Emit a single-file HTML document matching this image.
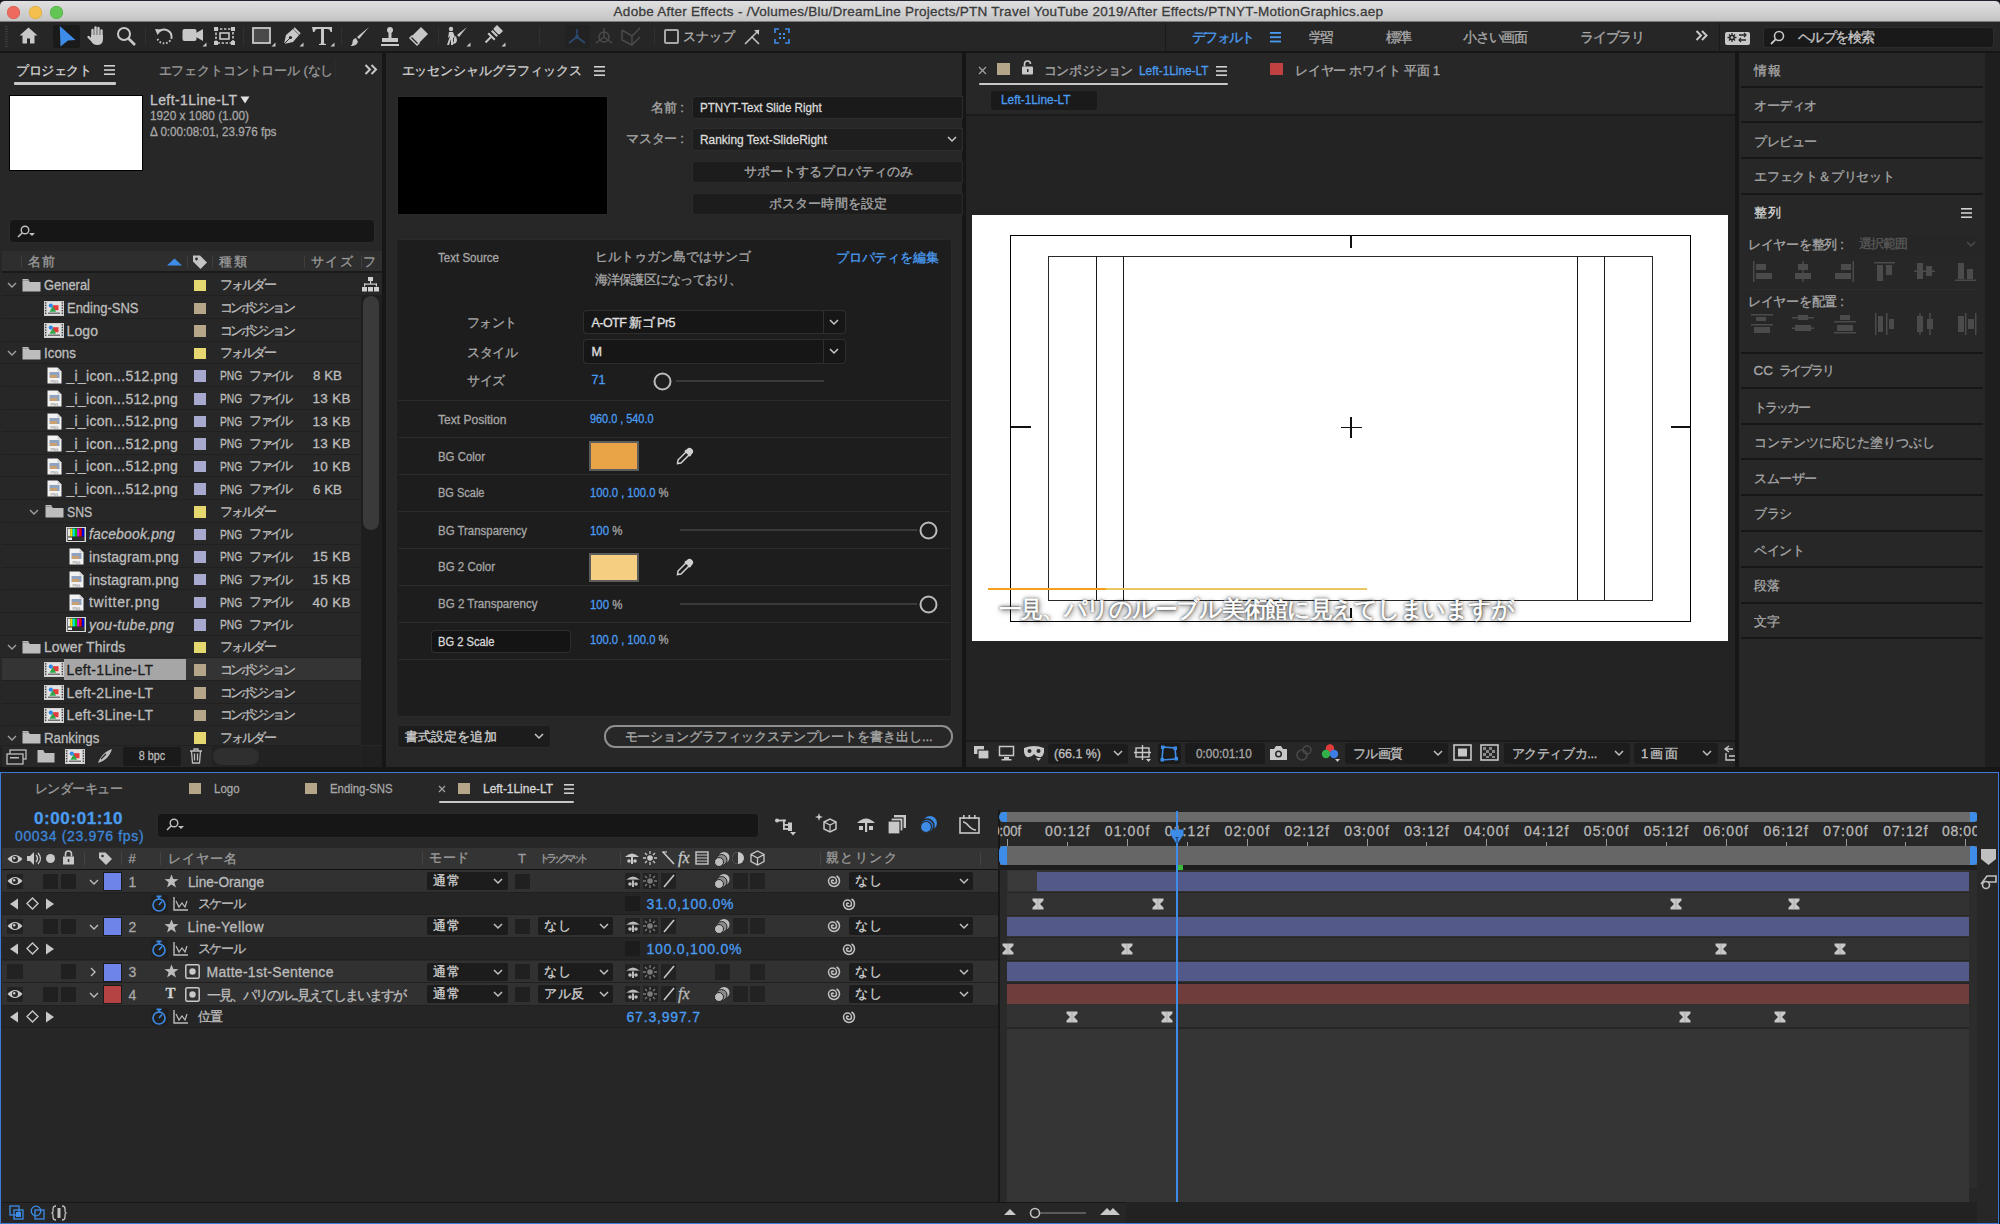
<!DOCTYPE html>
<html><head><meta charset="utf-8"><style>
html,body{margin:0;padding:0;width:2000px;height:1224px;overflow:hidden;background:#161616}
body{position:relative;font-family:"Liberation Sans",sans-serif;color:#a9a9a9}
.a{position:absolute}
.t{white-space:nowrap;-webkit-text-stroke:0.3px currentColor}
svg.a{overflow:visible}
</style></head><body>
<div class="a" style="left:0px;top:0px;width:2000px;height:22px;background:linear-gradient(#e0e0e0,#d2d2d2 50%,#c4c4c4);border-top:1.5px solid #22222e;border-bottom:1px solid #7a7a7a;box-sizing:border-box;border-radius:5px 5px 0 0"></div>
<div class="a" style="left:7.0px;top:5.5px;width:13px;height:13px;border-radius:50%;background:#ee6a5e;box-shadow:inset 0 0 0 0.5px #d0564a"></div>
<div class="a" style="left:28.5px;top:5.5px;width:13px;height:13px;border-radius:50%;background:#f5bf4f;box-shadow:inset 0 0 0 0.5px #d9a53a"></div>
<div class="a" style="left:50.0px;top:5.5px;width:13px;height:13px;border-radius:50%;background:#62c554;box-shadow:inset 0 0 0 0.5px #4aab3e"></div>
<div class="a t" style="left:398.5px;width:1200px;text-align:center;top:2.0px;font-size:13.5px;line-height:19px;color:#3a3a3a;letter-spacing:0.26px">Adobe After Effects - /Volumes/Blu/DreamLine Projects/PTN Travel YouTube 2019/After Effects/PTNYT-MotionGraphics.aep</div>
<div class="a" style="left:0px;top:22px;width:2000px;height:31px;background:#262626;border-bottom:2px solid #161616;box-sizing:border-box"></div>
<div class="a" style="left:0px;top:53px;width:382px;height:714px;background:#272727"></div>
<div class="a t" style="left:16px;top:61.5px;font-size:13px;line-height:18px;color:#d4d4d4;letter-spacing:-0.40px;width:86.0px;clip-path:inset(-12px 0 -12px -12px)">プロジェクト</div>
<svg class="a" style="left:104px;top:65px;" width="12" height="11" viewBox="0 0 12 11"><g fill="#d0d0d0"><rect x="0" y="0" width="11" height="1.6"/><rect x="0" y="4.2" width="11" height="1.6"/><rect x="0" y="8.4" width="11" height="1.6"/></g></svg>
<div class="a" style="left:14px;top:82px;width:102px;height:2.5px;background:#c8c8c8;border-radius:1px"></div>
<div class="a t" style="left:158.5px;top:61.5px;font-size:13px;line-height:18px;color:#9a9a9a;letter-spacing:-0.14px;width:185.0px;clip-path:inset(-12px 0 -12px -12px)">エフェクトコントロール (なし</div>
<div class="a" style="left:335px;top:60px;width:1px;height:22px;background:#2c2c2c"></div>
<svg class="a" style="left:364px;top:64px;" width="14" height="11" viewBox="0 0 14 11"><path d="M1.5 1 L6 5.5 L1.5 10 M7.5 1 L12 5.5 L7.5 10" stroke="#c8c8c8" stroke-width="2" fill="none"/></svg>
<div class="a" style="left:9px;top:95px;width:134px;height:76px;background:#ffffff;border:1px solid #000;box-sizing:border-box"></div>
<div class="a t" style="left:150px;top:90.0px;font-size:14px;line-height:20px;color:#c4c4c4;letter-spacing:0.40px;width:97.0px;clip-path:inset(-12px 0 -12px -12px)">Left-1Line-LT</div>
<svg class="a" style="left:240px;top:96px;" width="10" height="8" viewBox="0 0 10 8"><path d="M0.5 0.5 h9 L5 7.5z" fill="#e0e0e0"/></svg>
<div class="a t" style="left:150px;top:107.0px;font-size:13px;line-height:18px;color:#a8a8a8;transform:scaleX(0.907);transform-origin:left center">1920 x 1080 (1.00)</div>
<div class="a t" style="left:150px;top:122.5px;font-size:13px;line-height:18px;color:#a8a8a8;transform:scaleX(0.897);transform-origin:left center">&#916; 0:00:08:01, 23.976 fps</div>
<div class="a" style="left:9.5px;top:220px;width:364px;height:22px;background:#161616;border-radius:4px;box-shadow:0 0 0 1px #2a2a2a"></div>
<svg class="a" style="left:17px;top:225px;" width="20" height="13" viewBox="0 0 20 13"><circle cx="8" cy="5" r="3.8" stroke="#c0c0c0" stroke-width="1.4" fill="none"/><path d="M5.3 7.8 L1 12" stroke="#c0c0c0" stroke-width="1.6"/><path d="M12 8 h6 l-3 3z" fill="#c0c0c0"/></svg>
<div class="a" style="left:2px;top:251px;width:380px;height:22px;background:#2e2e2e;border-bottom:2px solid #1a1a1a;box-sizing:border-box"></div>
<div class="a" style="left:20.5px;top:256px;width:1px;height:12px;background:#3e3e3e"></div>
<div class="a" style="left:187px;top:256px;width:1px;height:12px;background:#3e3e3e"></div>
<div class="a" style="left:212px;top:256px;width:1px;height:12px;background:#3e3e3e"></div>
<div class="a" style="left:304px;top:256px;width:1px;height:12px;background:#3e3e3e"></div>
<div class="a" style="left:361px;top:256px;width:1px;height:12px;background:#3e3e3e"></div>
<div class="a t" style="left:27.5px;top:253.0px;font-size:13px;line-height:18px;color:#9c9c9c;letter-spacing:1.50px;width:37.5px;clip-path:inset(-12px 0 -12px -12px)">名前</div>
<svg class="a" style="left:167px;top:258px;" width="15" height="8" viewBox="0 0 15 8"><path d="M0 7.5 L7.5 0.5 L15 7.5z" fill="#3d8de8"/></svg>
<svg class="a" style="left:192px;top:254px;" width="16" height="16" viewBox="0 0 16 16"><path d="M1 1.5 h7 l7 7 -6.5 6.5 -7.5-7.5z" fill="#c4c4c4"/><circle cx="4.5" cy="5" r="1.4" fill="#2e2e2e"/></svg>
<div class="a t" style="left:218.5px;top:253.0px;font-size:13px;line-height:18px;color:#9c9c9c;letter-spacing:2.60px;width:38.6px;clip-path:inset(-12px 0 -12px -12px)">種類</div>
<div class="a t" style="left:310.5px;top:253.0px;font-size:13px;line-height:18px;color:#9c9c9c;letter-spacing:1.50px;width:52.0px;clip-path:inset(-12px 0 -12px -12px)">サイズ</div>
<div class="a t" style="left:363px;top:253.0px;font-size:13px;line-height:18px;color:#9c9c9c">フ</div>
<div class="a" style="left:2px;top:273.8px;width:359px;height:22.62px;background:#272727;border-bottom:1px solid #202020;box-sizing:border-box"></div>
<svg class="a" style="left:6.5px;top:282.41px;" width="10" height="6" viewBox="0 0 10 6"><path d="M1 1 L5 5 L9 1" stroke="#a0a0a0" stroke-width="1.4" fill="none"/></svg>
<svg class="a" style="left:21.5px;top:277.91px;" width="19" height="14" viewBox="0 0 19 14"><path d="M0.5 2.5 h6 l1.5 1.5 h10.5 v9.5 h-18z" fill="#bdbdbd"/><path d="M0.5 1 h5.5 l1.5 1.5 h-7z" fill="#bdbdbd"/></svg>
<div class="a t" style="left:44px;top:275.4px;font-size:14px;line-height:20px;color:#bdbdbd;;transform:scaleX(0.923);transform-origin:left center">General</div>
<div class="a" style="left:193.5px;top:279.91px;width:12px;height:11.5px;background:#e6d870"></div>
<div class="a t" style="left:219.5px;top:276.4px;font-size:13px;line-height:18px;color:#bdbdbd;letter-spacing:-1.80px;width:67.8px;clip-path:inset(-12px 0 -12px -12px)">フォルダー</div>
<div class="a" style="left:2px;top:296.42px;width:359px;height:22.62px;background:#272727;border-bottom:1px solid #202020;box-sizing:border-box"></div>
<svg class="a" style="left:44px;top:300.53000000000003px;" width="20" height="15" viewBox="0 0 20 15"><rect x="0" y="0" width="20" height="15" fill="#cfcfcf"/><g fill="#3a3a3a"><rect x="1" y="1.2" width="1.3" height="1.3"/><rect x="17.7" y="1.2" width="1.3" height="1.3"/><rect x="1" y="3.8" width="1.3" height="1.3"/><rect x="17.7" y="3.8" width="1.3" height="1.3"/><rect x="1" y="6.4" width="1.3" height="1.3"/><rect x="17.7" y="6.4" width="1.3" height="1.3"/><rect x="1" y="9.0" width="1.3" height="1.3"/><rect x="17.7" y="9.0" width="1.3" height="1.3"/><rect x="1" y="11.6" width="1.3" height="1.3"/><rect x="17.7" y="11.6" width="1.3" height="1.3"/></g><rect x="3.2" y="1" width="13.6" height="13" fill="#e2e2e2"/><rect x="4" y="11.6" width="12" height="1.2" fill="#555"/><rect x="9" y="4.2" width="5.5" height="5" fill="#e53b3b"/><path d="M5.5 10.8 l3.3-5.8 3.3 5.8z" fill="#2fa84a"/><circle cx="6.8" cy="4.6" r="2.1" fill="#2f86e6"/></svg>
<div class="a t" style="left:66.5px;top:298.0px;font-size:14px;line-height:20px;color:#bdbdbd;;transform:scaleX(0.927);transform-origin:left center">Ending-SNS</div>
<div class="a" style="left:193.5px;top:302.53000000000003px;width:12px;height:11.5px;background:#b5a589"></div>
<div class="a t" style="left:219.5px;top:299.0px;font-size:13px;line-height:18px;color:#bdbdbd;letter-spacing:-2.50px;width:86.0px;clip-path:inset(-12px 0 -12px -12px)">コンポジション</div>
<div class="a" style="left:2px;top:319.04px;width:359px;height:22.62px;background:#272727;border-bottom:1px solid #202020;box-sizing:border-box"></div>
<svg class="a" style="left:44px;top:323.15000000000003px;" width="20" height="15" viewBox="0 0 20 15"><rect x="0" y="0" width="20" height="15" fill="#cfcfcf"/><g fill="#3a3a3a"><rect x="1" y="1.2" width="1.3" height="1.3"/><rect x="17.7" y="1.2" width="1.3" height="1.3"/><rect x="1" y="3.8" width="1.3" height="1.3"/><rect x="17.7" y="3.8" width="1.3" height="1.3"/><rect x="1" y="6.4" width="1.3" height="1.3"/><rect x="17.7" y="6.4" width="1.3" height="1.3"/><rect x="1" y="9.0" width="1.3" height="1.3"/><rect x="17.7" y="9.0" width="1.3" height="1.3"/><rect x="1" y="11.6" width="1.3" height="1.3"/><rect x="17.7" y="11.6" width="1.3" height="1.3"/></g><rect x="3.2" y="1" width="13.6" height="13" fill="#e2e2e2"/><rect x="4" y="11.6" width="12" height="1.2" fill="#555"/><rect x="9" y="4.2" width="5.5" height="5" fill="#e53b3b"/><path d="M5.5 10.8 l3.3-5.8 3.3 5.8z" fill="#2fa84a"/><circle cx="6.8" cy="4.6" r="2.1" fill="#2f86e6"/></svg>
<div class="a t" style="left:66.5px;top:320.7px;font-size:14px;line-height:20px;color:#bdbdbd;;letter-spacing:0.15px;width:41.6px;clip-path:inset(-12px 0 -12px -12px)">Logo</div>
<div class="a" style="left:193.5px;top:325.15000000000003px;width:12px;height:11.5px;background:#b5a589"></div>
<div class="a t" style="left:219.5px;top:321.7px;font-size:13px;line-height:18px;color:#bdbdbd;letter-spacing:-2.50px;width:86.0px;clip-path:inset(-12px 0 -12px -12px)">コンポジション</div>
<div class="a" style="left:2px;top:341.66px;width:359px;height:22.62px;background:#272727;border-bottom:1px solid #202020;box-sizing:border-box"></div>
<svg class="a" style="left:6.5px;top:350.27000000000004px;" width="10" height="6" viewBox="0 0 10 6"><path d="M1 1 L5 5 L9 1" stroke="#a0a0a0" stroke-width="1.4" fill="none"/></svg>
<svg class="a" style="left:21.5px;top:345.77000000000004px;" width="19" height="14" viewBox="0 0 19 14"><path d="M0.5 2.5 h6 l1.5 1.5 h10.5 v9.5 h-18z" fill="#bdbdbd"/><path d="M0.5 1 h5.5 l1.5 1.5 h-7z" fill="#bdbdbd"/></svg>
<div class="a t" style="left:44px;top:343.3px;font-size:14px;line-height:20px;color:#bdbdbd;;transform:scaleX(0.956);transform-origin:left center">Icons</div>
<div class="a" style="left:193.5px;top:347.77000000000004px;width:12px;height:11.5px;background:#e6d870"></div>
<div class="a t" style="left:219.5px;top:344.3px;font-size:13px;line-height:18px;color:#bdbdbd;letter-spacing:-1.80px;width:67.8px;clip-path:inset(-12px 0 -12px -12px)">フォルダー</div>
<div class="a" style="left:2px;top:364.28000000000003px;width:359px;height:22.62px;background:#272727;border-bottom:1px solid #202020;box-sizing:border-box"></div>
<svg class="a" style="left:46.5px;top:367.39000000000004px;" width="15" height="17" viewBox="0 0 15 17"><path d="M0.5 0.5 h10 l4 4 v12 h-14z" fill="#f2f2f2"/><path d="M10.5 0.5 v4 h4" fill="#cfcfcf"/><rect x="2.5" y="5" width="10" height="6" fill="#8fa3c0"/><rect x="3" y="8" width="7" height="3" fill="#c9a070"/><text x="7.5" y="15.5" font-size="3.6" text-anchor="middle" fill="#777" font-family="Liberation Sans">PNG</text></svg>
<div class="a t" style="left:66.5px;top:365.9px;font-size:14px;line-height:20px;color:#bdbdbd;;letter-spacing:0.29px;width:121.3px;clip-path:inset(-12px 0 -12px -12px)">_i_icon...512.png</div>
<div class="a" style="left:193.5px;top:370.39000000000004px;width:12px;height:11.5px;background:#a8a9cf"></div>
<div class="a t" style="left:219.5px;top:366.4px;font-size:13.5px;line-height:19px;color:#bdbdbd;transform:scaleX(0.762);transform-origin:left center">PNG</div>
<div class="a t" style="left:249.4px;top:366.9px;font-size:13px;line-height:18px;color:#bdbdbd;letter-spacing:-2.83px;width:53.5px;clip-path:inset(-12px 0 -12px -12px)">ファイル</div>
<div class="a t" style="left:312.5px;top:366.4px;font-size:13.5px;line-height:19px;color:#bdbdbd;transform:scaleX(0.990);transform-origin:left center">8 KB</div>
<div class="a" style="left:2px;top:386.90000000000003px;width:359px;height:22.62px;background:#272727;border-bottom:1px solid #202020;box-sizing:border-box"></div>
<svg class="a" style="left:46.5px;top:390.01000000000005px;" width="15" height="17" viewBox="0 0 15 17"><path d="M0.5 0.5 h10 l4 4 v12 h-14z" fill="#f2f2f2"/><path d="M10.5 0.5 v4 h4" fill="#cfcfcf"/><rect x="2.5" y="5" width="10" height="6" fill="#8fa3c0"/><rect x="3" y="8" width="7" height="3" fill="#c9a070"/><text x="7.5" y="15.5" font-size="3.6" text-anchor="middle" fill="#777" font-family="Liberation Sans">PNG</text></svg>
<div class="a t" style="left:66.5px;top:388.5px;font-size:14px;line-height:20px;color:#bdbdbd;;letter-spacing:0.29px;width:121.3px;clip-path:inset(-12px 0 -12px -12px)">_i_icon...512.png</div>
<div class="a" style="left:193.5px;top:393.01000000000005px;width:12px;height:11.5px;background:#a8a9cf"></div>
<div class="a t" style="left:219.5px;top:389.0px;font-size:13.5px;line-height:19px;color:#bdbdbd;transform:scaleX(0.762);transform-origin:left center">PNG</div>
<div class="a t" style="left:249.4px;top:389.5px;font-size:13px;line-height:18px;color:#bdbdbd;letter-spacing:-2.83px;width:53.5px;clip-path:inset(-12px 0 -12px -12px)">ファイル</div>
<div class="a t" style="left:312.5px;top:389.0px;font-size:13.5px;line-height:19px;color:#bdbdbd;letter-spacing:0.30px;width:48.0px;clip-path:inset(-12px 0 -12px -12px)">13 KB</div>
<div class="a" style="left:2px;top:409.52px;width:359px;height:22.62px;background:#272727;border-bottom:1px solid #202020;box-sizing:border-box"></div>
<svg class="a" style="left:46.5px;top:412.63px;" width="15" height="17" viewBox="0 0 15 17"><path d="M0.5 0.5 h10 l4 4 v12 h-14z" fill="#f2f2f2"/><path d="M10.5 0.5 v4 h4" fill="#cfcfcf"/><rect x="2.5" y="5" width="10" height="6" fill="#8fa3c0"/><rect x="3" y="8" width="7" height="3" fill="#c9a070"/><text x="7.5" y="15.5" font-size="3.6" text-anchor="middle" fill="#777" font-family="Liberation Sans">PNG</text></svg>
<div class="a t" style="left:66.5px;top:411.1px;font-size:14px;line-height:20px;color:#bdbdbd;;letter-spacing:0.29px;width:121.3px;clip-path:inset(-12px 0 -12px -12px)">_i_icon...512.png</div>
<div class="a" style="left:193.5px;top:415.63px;width:12px;height:11.5px;background:#a8a9cf"></div>
<div class="a t" style="left:219.5px;top:411.6px;font-size:13.5px;line-height:19px;color:#bdbdbd;transform:scaleX(0.762);transform-origin:left center">PNG</div>
<div class="a t" style="left:249.4px;top:412.1px;font-size:13px;line-height:18px;color:#bdbdbd;letter-spacing:-2.83px;width:53.5px;clip-path:inset(-12px 0 -12px -12px)">ファイル</div>
<div class="a t" style="left:312.5px;top:411.6px;font-size:13.5px;line-height:19px;color:#bdbdbd;letter-spacing:0.30px;width:48.0px;clip-path:inset(-12px 0 -12px -12px)">13 KB</div>
<div class="a" style="left:2px;top:432.14px;width:359px;height:22.62px;background:#272727;border-bottom:1px solid #202020;box-sizing:border-box"></div>
<svg class="a" style="left:46.5px;top:435.25px;" width="15" height="17" viewBox="0 0 15 17"><path d="M0.5 0.5 h10 l4 4 v12 h-14z" fill="#f2f2f2"/><path d="M10.5 0.5 v4 h4" fill="#cfcfcf"/><rect x="2.5" y="5" width="10" height="6" fill="#8fa3c0"/><rect x="3" y="8" width="7" height="3" fill="#c9a070"/><text x="7.5" y="15.5" font-size="3.6" text-anchor="middle" fill="#777" font-family="Liberation Sans">PNG</text></svg>
<div class="a t" style="left:66.5px;top:433.8px;font-size:14px;line-height:20px;color:#bdbdbd;;letter-spacing:0.29px;width:121.3px;clip-path:inset(-12px 0 -12px -12px)">_i_icon...512.png</div>
<div class="a" style="left:193.5px;top:438.25px;width:12px;height:11.5px;background:#a8a9cf"></div>
<div class="a t" style="left:219.5px;top:434.2px;font-size:13.5px;line-height:19px;color:#bdbdbd;transform:scaleX(0.762);transform-origin:left center">PNG</div>
<div class="a t" style="left:249.4px;top:434.8px;font-size:13px;line-height:18px;color:#bdbdbd;letter-spacing:-2.83px;width:53.5px;clip-path:inset(-12px 0 -12px -12px)">ファイル</div>
<div class="a t" style="left:312.5px;top:434.2px;font-size:13.5px;line-height:19px;color:#bdbdbd;letter-spacing:0.30px;width:48.0px;clip-path:inset(-12px 0 -12px -12px)">13 KB</div>
<div class="a" style="left:2px;top:454.76px;width:359px;height:22.62px;background:#272727;border-bottom:1px solid #202020;box-sizing:border-box"></div>
<svg class="a" style="left:46.5px;top:457.87px;" width="15" height="17" viewBox="0 0 15 17"><path d="M0.5 0.5 h10 l4 4 v12 h-14z" fill="#f2f2f2"/><path d="M10.5 0.5 v4 h4" fill="#cfcfcf"/><rect x="2.5" y="5" width="10" height="6" fill="#8fa3c0"/><rect x="3" y="8" width="7" height="3" fill="#c9a070"/><text x="7.5" y="15.5" font-size="3.6" text-anchor="middle" fill="#777" font-family="Liberation Sans">PNG</text></svg>
<div class="a t" style="left:66.5px;top:456.4px;font-size:14px;line-height:20px;color:#bdbdbd;;letter-spacing:0.29px;width:121.3px;clip-path:inset(-12px 0 -12px -12px)">_i_icon...512.png</div>
<div class="a" style="left:193.5px;top:460.87px;width:12px;height:11.5px;background:#a8a9cf"></div>
<div class="a t" style="left:219.5px;top:456.9px;font-size:13.5px;line-height:19px;color:#bdbdbd;transform:scaleX(0.762);transform-origin:left center">PNG</div>
<div class="a t" style="left:249.4px;top:457.4px;font-size:13px;line-height:18px;color:#bdbdbd;letter-spacing:-2.83px;width:53.5px;clip-path:inset(-12px 0 -12px -12px)">ファイル</div>
<div class="a t" style="left:312.5px;top:456.9px;font-size:13.5px;line-height:19px;color:#bdbdbd;letter-spacing:0.30px;width:48.0px;clip-path:inset(-12px 0 -12px -12px)">10 KB</div>
<div class="a" style="left:2px;top:477.38px;width:359px;height:22.62px;background:#272727;border-bottom:1px solid #202020;box-sizing:border-box"></div>
<svg class="a" style="left:46.5px;top:480.49px;" width="15" height="17" viewBox="0 0 15 17"><path d="M0.5 0.5 h10 l4 4 v12 h-14z" fill="#f2f2f2"/><path d="M10.5 0.5 v4 h4" fill="#cfcfcf"/><rect x="2.5" y="5" width="10" height="6" fill="#8fa3c0"/><rect x="3" y="8" width="7" height="3" fill="#c9a070"/><text x="7.5" y="15.5" font-size="3.6" text-anchor="middle" fill="#777" font-family="Liberation Sans">PNG</text></svg>
<div class="a t" style="left:66.5px;top:479.0px;font-size:14px;line-height:20px;color:#bdbdbd;;letter-spacing:0.29px;width:121.3px;clip-path:inset(-12px 0 -12px -12px)">_i_icon...512.png</div>
<div class="a" style="left:193.5px;top:483.49px;width:12px;height:11.5px;background:#a8a9cf"></div>
<div class="a t" style="left:219.5px;top:479.5px;font-size:13.5px;line-height:19px;color:#bdbdbd;transform:scaleX(0.762);transform-origin:left center">PNG</div>
<div class="a t" style="left:249.4px;top:480.0px;font-size:13px;line-height:18px;color:#bdbdbd;letter-spacing:-2.83px;width:53.5px;clip-path:inset(-12px 0 -12px -12px)">ファイル</div>
<div class="a t" style="left:312.5px;top:479.5px;font-size:13.5px;line-height:19px;color:#bdbdbd;transform:scaleX(0.990);transform-origin:left center">6 KB</div>
<div class="a" style="left:2px;top:500.0px;width:359px;height:22.62px;background:#272727;border-bottom:1px solid #202020;box-sizing:border-box"></div>
<svg class="a" style="left:29px;top:508.61px;" width="10" height="6" viewBox="0 0 10 6"><path d="M1 1 L5 5 L9 1" stroke="#a0a0a0" stroke-width="1.4" fill="none"/></svg>
<svg class="a" style="left:44.5px;top:504.11px;" width="19" height="14" viewBox="0 0 19 14"><path d="M0.5 2.5 h6 l1.5 1.5 h10.5 v9.5 h-18z" fill="#bdbdbd"/><path d="M0.5 1 h5.5 l1.5 1.5 h-7z" fill="#bdbdbd"/></svg>
<div class="a t" style="left:66.5px;top:501.6px;font-size:14px;line-height:20px;color:#bdbdbd;;transform:scaleX(0.875);transform-origin:left center">SNS</div>
<div class="a" style="left:193.5px;top:506.11px;width:12px;height:11.5px;background:#e6d870"></div>
<div class="a t" style="left:219.5px;top:502.6px;font-size:13px;line-height:18px;color:#bdbdbd;letter-spacing:-1.80px;width:67.8px;clip-path:inset(-12px 0 -12px -12px)">フォルダー</div>
<div class="a" style="left:2px;top:522.62px;width:359px;height:22.62px;background:#272727;border-bottom:1px solid #202020;box-sizing:border-box"></div>
<svg class="a" style="left:66px;top:526.7299999999999px;" width="20" height="15" viewBox="0 0 20 15"><rect x="0" y="0" width="20" height="15" fill="#d8d8d8"/><rect x="1.5" y="1" width="17" height="13" fill="#202020"/><rect x="2.0" y="1.5" width="2.3" height="8" fill="#e8e8e8"/><rect x="4.3" y="1.5" width="2.3" height="8" fill="#e8e800"/><rect x="6.6" y="1.5" width="2.3" height="8" fill="#00e8e8"/><rect x="8.9" y="1.5" width="2.3" height="8" fill="#00c000"/><rect x="11.2" y="1.5" width="2.3" height="8" fill="#e800e8"/><rect x="13.5" y="1.5" width="2.3" height="8" fill="#e80000"/><rect x="15.8" y="1.5" width="2.3" height="8" fill="#0000e8"/><rect x="2" y="10" width="16" height="3.5" fill="#303030"/><rect x="2" y="10.5" width="4" height="2.5" fill="#e8e8e8"/></svg>
<div class="a t" style="left:89px;top:524.2px;font-size:14px;line-height:20px;color:#bdbdbd;font-style:italic;letter-spacing:0.16px;width:95.8px;clip-path:inset(-12px 0 -12px -12px)">facebook.png</div>
<div class="a" style="left:193.5px;top:528.7299999999999px;width:12px;height:11.5px;background:#a8a9cf"></div>
<div class="a t" style="left:219.5px;top:524.7px;font-size:13.5px;line-height:19px;color:#bdbdbd;transform:scaleX(0.762);transform-origin:left center">PNG</div>
<div class="a t" style="left:249.4px;top:525.2px;font-size:13px;line-height:18px;color:#bdbdbd;letter-spacing:-2.83px;width:53.5px;clip-path:inset(-12px 0 -12px -12px)">ファイル</div>
<div class="a" style="left:2px;top:545.24px;width:359px;height:22.62px;background:#272727;border-bottom:1px solid #202020;box-sizing:border-box"></div>
<svg class="a" style="left:68.5px;top:548.3499999999999px;" width="15" height="17" viewBox="0 0 15 17"><path d="M0.5 0.5 h10 l4 4 v12 h-14z" fill="#f2f2f2"/><path d="M10.5 0.5 v4 h4" fill="#cfcfcf"/><rect x="2.5" y="5" width="10" height="6" fill="#8fa3c0"/><rect x="3" y="8" width="7" height="3" fill="#c9a070"/><text x="7.5" y="15.5" font-size="3.6" text-anchor="middle" fill="#777" font-family="Liberation Sans">PNG</text></svg>
<div class="a t" style="left:89px;top:546.8px;font-size:14px;line-height:20px;color:#bdbdbd;;letter-spacing:0.09px;width:99.8px;clip-path:inset(-12px 0 -12px -12px)">instagram.png</div>
<div class="a" style="left:193.5px;top:551.3499999999999px;width:12px;height:11.5px;background:#a8a9cf"></div>
<div class="a t" style="left:219.5px;top:547.3px;font-size:13.5px;line-height:19px;color:#bdbdbd;transform:scaleX(0.762);transform-origin:left center">PNG</div>
<div class="a t" style="left:249.4px;top:547.8px;font-size:13px;line-height:18px;color:#bdbdbd;letter-spacing:-2.83px;width:53.5px;clip-path:inset(-12px 0 -12px -12px)">ファイル</div>
<div class="a t" style="left:312.5px;top:547.3px;font-size:13.5px;line-height:19px;color:#bdbdbd;letter-spacing:0.30px;width:48.0px;clip-path:inset(-12px 0 -12px -12px)">15 KB</div>
<div class="a" style="left:2px;top:567.86px;width:359px;height:22.62px;background:#272727;border-bottom:1px solid #202020;box-sizing:border-box"></div>
<svg class="a" style="left:68.5px;top:570.9699999999999px;" width="15" height="17" viewBox="0 0 15 17"><path d="M0.5 0.5 h10 l4 4 v12 h-14z" fill="#f2f2f2"/><path d="M10.5 0.5 v4 h4" fill="#cfcfcf"/><rect x="2.5" y="5" width="10" height="6" fill="#8fa3c0"/><rect x="3" y="8" width="7" height="3" fill="#c9a070"/><text x="7.5" y="15.5" font-size="3.6" text-anchor="middle" fill="#777" font-family="Liberation Sans">PNG</text></svg>
<div class="a t" style="left:89px;top:569.5px;font-size:14px;line-height:20px;color:#bdbdbd;;letter-spacing:0.09px;width:99.8px;clip-path:inset(-12px 0 -12px -12px)">instagram.png</div>
<div class="a" style="left:193.5px;top:573.9699999999999px;width:12px;height:11.5px;background:#a8a9cf"></div>
<div class="a t" style="left:219.5px;top:570.0px;font-size:13.5px;line-height:19px;color:#bdbdbd;transform:scaleX(0.762);transform-origin:left center">PNG</div>
<div class="a t" style="left:249.4px;top:570.5px;font-size:13px;line-height:18px;color:#bdbdbd;letter-spacing:-2.83px;width:53.5px;clip-path:inset(-12px 0 -12px -12px)">ファイル</div>
<div class="a t" style="left:312.5px;top:570.0px;font-size:13.5px;line-height:19px;color:#bdbdbd;letter-spacing:0.30px;width:48.0px;clip-path:inset(-12px 0 -12px -12px)">15 KB</div>
<div class="a" style="left:2px;top:590.48px;width:359px;height:22.62px;background:#272727;border-bottom:1px solid #202020;box-sizing:border-box"></div>
<svg class="a" style="left:68.5px;top:593.5899999999999px;" width="15" height="17" viewBox="0 0 15 17"><path d="M0.5 0.5 h10 l4 4 v12 h-14z" fill="#f2f2f2"/><path d="M10.5 0.5 v4 h4" fill="#cfcfcf"/><rect x="2.5" y="5" width="10" height="6" fill="#8fa3c0"/><rect x="3" y="8" width="7" height="3" fill="#c9a070"/><text x="7.5" y="15.5" font-size="3.6" text-anchor="middle" fill="#777" font-family="Liberation Sans">PNG</text></svg>
<div class="a t" style="left:89px;top:592.1px;font-size:14px;line-height:20px;color:#bdbdbd;;letter-spacing:0.65px;width:80.3px;clip-path:inset(-12px 0 -12px -12px)">twitter.png</div>
<div class="a" style="left:193.5px;top:596.5899999999999px;width:12px;height:11.5px;background:#a8a9cf"></div>
<div class="a t" style="left:219.5px;top:592.6px;font-size:13.5px;line-height:19px;color:#bdbdbd;transform:scaleX(0.762);transform-origin:left center">PNG</div>
<div class="a t" style="left:249.4px;top:593.1px;font-size:13px;line-height:18px;color:#bdbdbd;letter-spacing:-2.83px;width:53.5px;clip-path:inset(-12px 0 -12px -12px)">ファイル</div>
<div class="a t" style="left:312.5px;top:592.6px;font-size:13.5px;line-height:19px;color:#bdbdbd;letter-spacing:0.30px;width:48.0px;clip-path:inset(-12px 0 -12px -12px)">40 KB</div>
<div class="a" style="left:2px;top:613.1px;width:359px;height:22.62px;background:#272727;border-bottom:1px solid #202020;box-sizing:border-box"></div>
<svg class="a" style="left:66px;top:617.2099999999999px;" width="20" height="15" viewBox="0 0 20 15"><rect x="0" y="0" width="20" height="15" fill="#d8d8d8"/><rect x="1.5" y="1" width="17" height="13" fill="#202020"/><rect x="2.0" y="1.5" width="2.3" height="8" fill="#e8e8e8"/><rect x="4.3" y="1.5" width="2.3" height="8" fill="#e8e800"/><rect x="6.6" y="1.5" width="2.3" height="8" fill="#00e8e8"/><rect x="8.9" y="1.5" width="2.3" height="8" fill="#00c000"/><rect x="11.2" y="1.5" width="2.3" height="8" fill="#e800e8"/><rect x="13.5" y="1.5" width="2.3" height="8" fill="#e80000"/><rect x="15.8" y="1.5" width="2.3" height="8" fill="#0000e8"/><rect x="2" y="10" width="16" height="3.5" fill="#303030"/><rect x="2" y="10.5" width="4" height="2.5" fill="#e8e8e8"/></svg>
<div class="a t" style="left:89px;top:614.7px;font-size:14px;line-height:20px;color:#bdbdbd;font-style:italic;letter-spacing:0.28px;width:94.8px;clip-path:inset(-12px 0 -12px -12px)">you-tube.png</div>
<div class="a" style="left:193.5px;top:619.2099999999999px;width:12px;height:11.5px;background:#a8a9cf"></div>
<div class="a t" style="left:219.5px;top:615.2px;font-size:13.5px;line-height:19px;color:#bdbdbd;transform:scaleX(0.762);transform-origin:left center">PNG</div>
<div class="a t" style="left:249.4px;top:615.7px;font-size:13px;line-height:18px;color:#bdbdbd;letter-spacing:-2.83px;width:53.5px;clip-path:inset(-12px 0 -12px -12px)">ファイル</div>
<div class="a" style="left:2px;top:635.72px;width:359px;height:22.62px;background:#272727;border-bottom:1px solid #202020;box-sizing:border-box"></div>
<svg class="a" style="left:6.5px;top:644.3299999999999px;" width="10" height="6" viewBox="0 0 10 6"><path d="M1 1 L5 5 L9 1" stroke="#a0a0a0" stroke-width="1.4" fill="none"/></svg>
<svg class="a" style="left:21.5px;top:639.8299999999999px;" width="19" height="14" viewBox="0 0 19 14"><path d="M0.5 2.5 h6 l1.5 1.5 h10.5 v9.5 h-18z" fill="#bdbdbd"/><path d="M0.5 1 h5.5 l1.5 1.5 h-7z" fill="#bdbdbd"/></svg>
<div class="a t" style="left:44px;top:637.3px;font-size:14px;line-height:20px;color:#bdbdbd;;letter-spacing:0.05px;width:91.2px;clip-path:inset(-12px 0 -12px -12px)">Lower Thirds</div>
<div class="a" style="left:193.5px;top:641.8299999999999px;width:12px;height:11.5px;background:#e6d870"></div>
<div class="a t" style="left:219.5px;top:638.3px;font-size:13px;line-height:18px;color:#bdbdbd;letter-spacing:-1.80px;width:67.8px;clip-path:inset(-12px 0 -12px -12px)">フォルダー</div>
<div class="a" style="left:2px;top:658.34px;width:359px;height:22.62px;background:#343434;border-bottom:1px solid #202020;box-sizing:border-box"></div>
<svg class="a" style="left:44px;top:662.4499999999999px;" width="20" height="15" viewBox="0 0 20 15"><rect x="0" y="0" width="20" height="15" fill="#cfcfcf"/><g fill="#3a3a3a"><rect x="1" y="1.2" width="1.3" height="1.3"/><rect x="17.7" y="1.2" width="1.3" height="1.3"/><rect x="1" y="3.8" width="1.3" height="1.3"/><rect x="17.7" y="3.8" width="1.3" height="1.3"/><rect x="1" y="6.4" width="1.3" height="1.3"/><rect x="17.7" y="6.4" width="1.3" height="1.3"/><rect x="1" y="9.0" width="1.3" height="1.3"/><rect x="17.7" y="9.0" width="1.3" height="1.3"/><rect x="1" y="11.6" width="1.3" height="1.3"/><rect x="17.7" y="11.6" width="1.3" height="1.3"/></g><rect x="3.2" y="1" width="13.6" height="13" fill="#e2e2e2"/><rect x="4" y="11.6" width="12" height="1.2" fill="#555"/><rect x="9" y="4.2" width="5.5" height="5" fill="#e53b3b"/><path d="M5.5 10.8 l3.3-5.8 3.3 5.8z" fill="#2fa84a"/><circle cx="6.8" cy="4.6" r="2.1" fill="#2f86e6"/></svg>
<div class="a" style="left:64px;top:659.34px;width:122px;height:20.62px;background:#a6a6a6"></div>
<div class="a t" style="left:66.5px;top:659.9px;font-size:14px;line-height:20px;color:#1c1c1c;letter-spacing:0.36px;width:96.5px;clip-path:inset(-12px 0 -12px -12px)">Left-1Line-LT</div>
<div class="a" style="left:193.5px;top:664.4499999999999px;width:12px;height:11.5px;background:#b5a589"></div>
<div class="a t" style="left:219.5px;top:660.9px;font-size:13px;line-height:18px;color:#bdbdbd;letter-spacing:-2.50px;width:86.0px;clip-path:inset(-12px 0 -12px -12px)">コンポジション</div>
<div class="a" style="left:2px;top:680.96px;width:359px;height:22.62px;background:#272727;border-bottom:1px solid #202020;box-sizing:border-box"></div>
<svg class="a" style="left:44px;top:685.0699999999999px;" width="20" height="15" viewBox="0 0 20 15"><rect x="0" y="0" width="20" height="15" fill="#cfcfcf"/><g fill="#3a3a3a"><rect x="1" y="1.2" width="1.3" height="1.3"/><rect x="17.7" y="1.2" width="1.3" height="1.3"/><rect x="1" y="3.8" width="1.3" height="1.3"/><rect x="17.7" y="3.8" width="1.3" height="1.3"/><rect x="1" y="6.4" width="1.3" height="1.3"/><rect x="17.7" y="6.4" width="1.3" height="1.3"/><rect x="1" y="9.0" width="1.3" height="1.3"/><rect x="17.7" y="9.0" width="1.3" height="1.3"/><rect x="1" y="11.6" width="1.3" height="1.3"/><rect x="17.7" y="11.6" width="1.3" height="1.3"/></g><rect x="3.2" y="1" width="13.6" height="13" fill="#e2e2e2"/><rect x="4" y="11.6" width="12" height="1.2" fill="#555"/><rect x="9" y="4.2" width="5.5" height="5" fill="#e53b3b"/><path d="M5.5 10.8 l3.3-5.8 3.3 5.8z" fill="#2fa84a"/><circle cx="6.8" cy="4.6" r="2.1" fill="#2f86e6"/></svg>
<div class="a t" style="left:66.5px;top:682.6px;font-size:14px;line-height:20px;color:#bdbdbd;;letter-spacing:0.36px;width:96.5px;clip-path:inset(-12px 0 -12px -12px)">Left-2Line-LT</div>
<div class="a" style="left:193.5px;top:687.0699999999999px;width:12px;height:11.5px;background:#b5a589"></div>
<div class="a t" style="left:219.5px;top:683.6px;font-size:13px;line-height:18px;color:#bdbdbd;letter-spacing:-2.50px;width:86.0px;clip-path:inset(-12px 0 -12px -12px)">コンポジション</div>
<div class="a" style="left:2px;top:703.58px;width:359px;height:22.62px;background:#272727;border-bottom:1px solid #202020;box-sizing:border-box"></div>
<svg class="a" style="left:44px;top:707.6899999999999px;" width="20" height="15" viewBox="0 0 20 15"><rect x="0" y="0" width="20" height="15" fill="#cfcfcf"/><g fill="#3a3a3a"><rect x="1" y="1.2" width="1.3" height="1.3"/><rect x="17.7" y="1.2" width="1.3" height="1.3"/><rect x="1" y="3.8" width="1.3" height="1.3"/><rect x="17.7" y="3.8" width="1.3" height="1.3"/><rect x="1" y="6.4" width="1.3" height="1.3"/><rect x="17.7" y="6.4" width="1.3" height="1.3"/><rect x="1" y="9.0" width="1.3" height="1.3"/><rect x="17.7" y="9.0" width="1.3" height="1.3"/><rect x="1" y="11.6" width="1.3" height="1.3"/><rect x="17.7" y="11.6" width="1.3" height="1.3"/></g><rect x="3.2" y="1" width="13.6" height="13" fill="#e2e2e2"/><rect x="4" y="11.6" width="12" height="1.2" fill="#555"/><rect x="9" y="4.2" width="5.5" height="5" fill="#e53b3b"/><path d="M5.5 10.8 l3.3-5.8 3.3 5.8z" fill="#2fa84a"/><circle cx="6.8" cy="4.6" r="2.1" fill="#2f86e6"/></svg>
<div class="a t" style="left:66.5px;top:705.2px;font-size:14px;line-height:20px;color:#bdbdbd;;letter-spacing:0.36px;width:96.5px;clip-path:inset(-12px 0 -12px -12px)">Left-3Line-LT</div>
<div class="a" style="left:193.5px;top:709.6899999999999px;width:12px;height:11.5px;background:#b5a589"></div>
<div class="a t" style="left:219.5px;top:706.2px;font-size:13px;line-height:18px;color:#bdbdbd;letter-spacing:-2.50px;width:86.0px;clip-path:inset(-12px 0 -12px -12px)">コンポジション</div>
<div class="a" style="left:2px;top:726.2px;width:359px;height:19.799999999999955px;background:#272727;border-bottom:1px solid #202020;box-sizing:border-box"></div>
<svg class="a" style="left:6.5px;top:734.81px;" width="10" height="6" viewBox="0 0 10 6"><path d="M1 1 L5 5 L9 1" stroke="#a0a0a0" stroke-width="1.4" fill="none"/></svg>
<svg class="a" style="left:21.5px;top:730.31px;" width="19" height="14" viewBox="0 0 19 14"><path d="M0.5 2.5 h6 l1.5 1.5 h10.5 v9.5 h-18z" fill="#bdbdbd"/><path d="M0.5 1 h5.5 l1.5 1.5 h-7z" fill="#bdbdbd"/></svg>
<div class="a t" style="left:44px;top:727.8px;font-size:14px;line-height:20px;color:#bdbdbd;;transform:scaleX(0.949);transform-origin:left center">Rankings</div>
<div class="a" style="left:193.5px;top:732.31px;width:12px;height:11.5px;background:#e6d870"></div>
<div class="a t" style="left:219.5px;top:728.8px;font-size:13px;line-height:18px;color:#bdbdbd;letter-spacing:-1.80px;width:67.8px;clip-path:inset(-12px 0 -12px -12px)">フォルダー</div>
<svg class="a" style="left:362px;top:277px;" width="17" height="15" viewBox="0 0 17 15"><g fill="#d0d0d0"><rect x="6" y="0" width="5" height="4"/><rect x="8" y="4" width="1.2" height="3"/><rect x="2" y="6.5" width="13" height="1.2"/><rect x="2" y="6.5" width="1.2" height="3"/><rect x="13.8" y="6.5" width="1.2" height="3"/><rect x="0" y="10" width="5" height="4.5"/><rect x="12" y="10" width="5" height="4.5"/><rect x="6" y="10" width="5" height="4.5"/></g></svg>
<div class="a" style="left:361px;top:295px;width:21px;height:450px;background:#1e1e1e"></div>
<div class="a" style="left:363px;top:296px;width:16px;height:234px;background:#3a3a3a;border-radius:8px"></div>
<div class="a" style="left:0px;top:746px;width:382px;height:21px;background:#202020"></div>
<div class="a" style="left:2px;top:746px;width:358px;height:21px;background:#272727"></div>
<svg class="a" style="left:6px;top:748px;" width="21" height="17" viewBox="0 0 21 17"><g fill="none" stroke="#bdbdbd" stroke-width="1.3"><rect x="4" y="2" width="16" height="9"/><rect x="1" y="6" width="16" height="10" fill="#272727"/></g><rect x="4" y="9" width="9" height="1.5" fill="#bdbdbd"/></svg>
<svg class="a" style="left:37px;top:749px;" width="18" height="14" viewBox="0 0 18 14"><path d="M0.5 2.5 h6 l1.5 1.5 h9.5 v9.5 h-17z M0.5 1 h5.5 l1.5 1.5 h-7z" fill="#bdbdbd"/></svg>
<svg class="a" style="left:65px;top:749px;" width="20" height="15" viewBox="0 0 20 15"><rect x="0" y="0" width="20" height="15" fill="#cfcfcf"/><g fill="#3a3a3a"><rect x="1" y="1.2" width="1.3" height="1.3"/><rect x="17.7" y="1.2" width="1.3" height="1.3"/><rect x="1" y="3.8" width="1.3" height="1.3"/><rect x="17.7" y="3.8" width="1.3" height="1.3"/><rect x="1" y="6.4" width="1.3" height="1.3"/><rect x="17.7" y="6.4" width="1.3" height="1.3"/><rect x="1" y="9.0" width="1.3" height="1.3"/><rect x="17.7" y="9.0" width="1.3" height="1.3"/><rect x="1" y="11.6" width="1.3" height="1.3"/><rect x="17.7" y="11.6" width="1.3" height="1.3"/></g><rect x="3.2" y="1" width="13.6" height="13" fill="#e2e2e2"/><rect x="4" y="11.6" width="12" height="1.2" fill="#555"/><rect x="9" y="4.2" width="5.5" height="5" fill="#e53b3b"/><path d="M5.5 10.8 l3.3-5.8 3.3 5.8z" fill="#2fa84a"/><circle cx="6.8" cy="4.6" r="2.1" fill="#2f86e6"/></svg>
<svg class="a" style="left:96px;top:748px;" width="17" height="17" viewBox="0 0 17 17"><path d="M2 15 C4 9 9 3 16 1 C14 8 9 13 2 15z" fill="#bdbdbd"/><path d="M5 11 L10 6" stroke="#272727" stroke-width="1.2"/></svg>
<div class="a" style="left:122.5px;top:747px;width:58px;height:19px;background:#1a1a1a;border-radius:3px"></div>
<div class="a t" style="left:122.5px;width:58px;text-align:center;top:748.0px;font-size:12px;line-height:17px;color:#b8b8b8;transform:scaleX(0.899);transform-origin:center center">8 bpc</div>
<svg class="a" style="left:189px;top:748px;" width="14" height="16" viewBox="0 0 14 16"><g fill="none" stroke="#bdbdbd" stroke-width="1.3"><path d="M1 3 h12 M5 3 v-2 h4 v2 M2.5 3 l1 12 h7 l1-12 M5.5 5.5 v7 M8.5 5.5 v7"/></g></svg>
<div class="a" style="left:212px;top:746px;width:150px;height:21px;background:#222"></div>
<div class="a" style="left:213px;top:748px;width:46px;height:17px;background:#2f2f2f;border-radius:9px"></div>
<div class="a" style="left:386px;top:53px;width:576px;height:714px;background:#272727"></div>
<div class="a t" style="left:401.5px;top:61.5px;font-size:13px;line-height:18px;color:#d0d0d0;letter-spacing:-0.12px;width:190.5px;clip-path:inset(-12px 0 -12px -12px)">エッセンシャルグラフィックス</div>
<svg class="a" style="left:594px;top:66px;" width="11" height="10" viewBox="0 0 11 10"><g fill="#d0d0d0"><rect x="0" y="0" width="11" height="1.6"/><rect x="0" y="4.2" width="11" height="1.6"/><rect x="0" y="8.4" width="11" height="1.6"/></g></svg>
<div class="a" style="left:398px;top:96.5px;width:209px;height:117px;background:#000;box-shadow:0 0 0 1px #2a2a2a"></div>
<div class="a t" style="right:1316.5px;top:98.5px;font-size:13px;line-height:18px;color:#a8a8a8;letter-spacing:-0.28px;width:42.4px;text-align:right;clip-path:inset(-12px -12px -12px 0)">名前 :</div>
<div class="a" style="left:692.5px;top:96.5px;width:269.5px;height:21px;background:#1a1a1a;border-radius:3px 0 0 3px;box-shadow:0 0 0 1px #2c2c2c"></div>
<div class="a t" style="left:700px;top:98.0px;font-size:13.5px;line-height:19px;color:#dcdcdc;transform:scaleX(0.858);transform-origin:left center">PTNYT-Text Slide Right</div>
<div class="a t" style="right:1316.5px;top:130.0px;font-size:13px;line-height:18px;color:#a8a8a8;letter-spacing:-0.35px;width:67.5px;text-align:right;clip-path:inset(-12px -12px -12px 0)">マスター :</div>
<div class="a" style="left:692.5px;top:128.5px;width:269.5px;height:21px;background:#1e1e1e;border-radius:3px 0 0 3px;box-shadow:0 0 0 1px #2c2c2c"></div>
<div class="a t" style="left:700px;top:129.5px;font-size:13.5px;line-height:19px;color:#dcdcdc;transform:scaleX(0.883);transform-origin:left center">Ranking Text-SlideRight</div>
<svg class="a" style="left:947.0px;top:136.0px;" width="10.0" height="6.0" viewBox="0 0 10.0 6.0"><path d="M1.0 1.0 L5.0 5.0 L9.0 1.0" stroke="#c8c8c8" stroke-width="1.5" fill="none"/></svg>
<div class="a" style="left:692.5px;top:161.5px;width:269.5px;height:20px;background:#1c1c1c;border-radius:3px 0 0 3px;box-shadow:0 0 0 1px #2a2a2a"></div>
<div class="a t" style="left:743.5px;top:162.5px;font-size:13px;line-height:18px;color:#a8a8a8;letter-spacing:0.00px;width:179.0px;clip-path:inset(-12px 0 -12px -12px)">サポートするプロパティのみ</div>
<div class="a" style="left:692.5px;top:193.5px;width:269.5px;height:20px;background:#1c1c1c;border-radius:3px 0 0 3px;box-shadow:0 0 0 1px #2a2a2a"></div>
<div class="a t" style="left:769px;top:194.5px;font-size:13px;line-height:18px;color:#a8a8a8;letter-spacing:0.12px;width:128.0px;clip-path:inset(-12px 0 -12px -12px)">ポスター時間を設定</div>
<div class="a" style="left:397px;top:240px;width:554px;height:476px;background:#1d1d1d;border-radius:3px;box-shadow:0 0 0 1px #2a2a2a"></div>
<div class="a" style="left:398px;top:400px;width:552px;height:1px;background:#2b2b2b"></div>
<div class="a" style="left:398px;top:437px;width:552px;height:1px;background:#2b2b2b"></div>
<div class="a" style="left:398px;top:474px;width:552px;height:1px;background:#2b2b2b"></div>
<div class="a" style="left:398px;top:511px;width:552px;height:1px;background:#2b2b2b"></div>
<div class="a" style="left:398px;top:548px;width:552px;height:1px;background:#2b2b2b"></div>
<div class="a" style="left:398px;top:585px;width:552px;height:1px;background:#2b2b2b"></div>
<div class="a" style="left:398px;top:622px;width:552px;height:1px;background:#2b2b2b"></div>
<div class="a" style="left:398px;top:659px;width:552px;height:1px;background:#2b2b2b"></div>
<div class="a t" style="left:438px;top:248.5px;font-size:12.5px;line-height:18px;color:#a6a6a6;transform:scaleX(0.924);transform-origin:left center">Text Source</div>
<div class="a t" style="left:594.5px;top:247.5px;font-size:13px;line-height:18px;color:#a6a6a6;letter-spacing:0.09px;width:167.0px;clip-path:inset(-12px 0 -12px -12px)">ヒルトゥガン島ではサンゴ</div>
<div class="a t" style="left:594.5px;top:270.5px;font-size:13px;line-height:18px;color:#a6a6a6;letter-spacing:-0.73px;width:158.0px;clip-path:inset(-12px 0 -12px -12px)">海洋保護区になっており、</div>
<div class="a t" style="left:836px;top:248.5px;font-size:13px;line-height:18px;color:#4a9cf0;letter-spacing:-0.21px;width:112.5px;clip-path:inset(-12px 0 -12px -12px)">プロパティを編集</div>
<div class="a t" style="left:467px;top:313.8px;font-size:13px;line-height:18px;color:#a6a6a6;letter-spacing:-0.67px;width:60.0px;clip-path:inset(-12px 0 -12px -12px)">フォント</div>
<div class="a" style="left:584px;top:311px;width:261px;height:22px;background:#161616;border-radius:3px;box-shadow:0 0 0 1px #2e2e2e"></div>
<div class="a" style="left:823px;top:311px;width:1px;height:22px;background:#2e2e2e"></div>
<div class="a t" style="left:591.5px;top:313.5px;font-size:12.5px;line-height:18px;color:#e0e0e0;letter-spacing:-0.54px;width:94.0px;clip-path:inset(-12px 0 -12px -12px)">A-OTF 新ゴ Pr5</div>
<svg class="a" style="left:828.5px;top:319.0px;" width="10.0" height="6.0" viewBox="0 0 10.0 6.0"><path d="M1.0 1.0 L5.0 5.0 L9.0 1.0" stroke="#c8c8c8" stroke-width="1.5" fill="none"/></svg>
<div class="a t" style="left:467px;top:343.5px;font-size:13px;line-height:18px;color:#a6a6a6;letter-spacing:-0.33px;width:61.0px;clip-path:inset(-12px 0 -12px -12px)">スタイル</div>
<div class="a" style="left:584px;top:340px;width:261px;height:22.5px;background:#161616;border-radius:3px;box-shadow:0 0 0 1px #2e2e2e"></div>
<div class="a" style="left:823px;top:340px;width:1px;height:22.5px;background:#2e2e2e"></div>
<div class="a t" style="left:591.5px;top:342.5px;font-size:12.5px;line-height:18px;color:#e0e0e0">M</div>
<svg class="a" style="left:828.5px;top:348.0px;" width="10.0" height="6.0" viewBox="0 0 10.0 6.0"><path d="M1.0 1.0 L5.0 5.0 L9.0 1.0" stroke="#c8c8c8" stroke-width="1.5" fill="none"/></svg>
<div class="a t" style="left:467px;top:372.0px;font-size:13px;line-height:18px;color:#a6a6a6;letter-spacing:-0.50px;width:48.0px;clip-path:inset(-12px 0 -12px -12px)">サイズ</div>
<div class="a t" style="left:591.5px;top:371.0px;font-size:12.5px;line-height:18px;color:#4a9cf0">71</div>
<div class="a" style="left:676px;top:380px;width:148px;height:2px;background:#3a3a3a"></div>
<svg class="a" style="left:652.5px;top:371.5px;" width="19" height="19" viewBox="0 0 19 19"><circle cx="9.5" cy="9.5" r="8" stroke="#bcbcbc" stroke-width="2" fill="#1e1e1e"/></svg>
<div class="a t" style="left:438px;top:410.5px;font-size:12.5px;line-height:18px;color:#a6a6a6;transform:scaleX(0.966);transform-origin:left center">Text Position</div>
<div class="a t" style="left:589.5px;top:410.0px;font-size:12.5px;line-height:18px;color:#4a9cf0;transform:scaleX(0.870);transform-origin:left center">960.0 , 540.0</div>
<div class="a t" style="left:438px;top:447.5px;font-size:12.5px;line-height:18px;color:#a6a6a6;transform:scaleX(0.914);transform-origin:left center">BG Color</div>
<div class="a" style="left:588.5px;top:441px;width:50px;height:29.5px;background:#e9a448;border:2px solid #5c5c5c;box-sizing:border-box"></div>
<svg class="a" style="left:675px;top:446px;" width="20" height="20" viewBox="0 0 20 20"><g fill="none" stroke="#d0d0d0" stroke-width="1.5"><path d="M11 6 L3 14 L2.5 17.5 L6 17 L14 9"/></g><path d="M12 3 a2.5 2.5 0 0 1 5 5 l-2 2 -5-5z" fill="#d0d0d0"/><path d="M10 4.5 L15.5 10" stroke="#d0d0d0" stroke-width="1.8"/></svg>
<div class="a t" style="left:438px;top:484.0px;font-size:12.5px;line-height:18px;color:#a6a6a6;transform:scaleX(0.880);transform-origin:left center">BG Scale</div>
<div class="a t" style="left:589.5px;top:483.5px;font-size:12.5px;line-height:18px;color:#4a9cf0;transform:scaleX(0.896);transform-origin:left center">100.0 , 100.0 <span style="color:#a6a6a6">%</span></div>
<div class="a t" style="left:438px;top:521.5px;font-size:12.5px;line-height:18px;color:#a6a6a6;transform:scaleX(0.915);transform-origin:left center">BG Transparency</div>
<div class="a t" style="left:589.5px;top:521.5px;font-size:12.5px;line-height:18px;color:#4a9cf0;transform:scaleX(0.916);transform-origin:left center">100 <span style="color:#a6a6a6">%</span></div>
<div class="a" style="left:680px;top:529px;width:237px;height:2px;background:#3a3a3a"></div>
<svg class="a" style="left:918.5px;top:520.5px;" width="19" height="19" viewBox="0 0 19 19"><circle cx="9.5" cy="9.5" r="8" stroke="#bcbcbc" stroke-width="2" fill="#1e1e1e"/></svg>
<div class="a t" style="left:438px;top:558.0px;font-size:12.5px;line-height:18px;color:#a6a6a6;transform:scaleX(0.922);transform-origin:left center">BG 2 Color</div>
<div class="a" style="left:588.5px;top:552.5px;width:50px;height:29px;background:#f5ce82;border:2px solid #5c5c5c;box-sizing:border-box"></div>
<svg class="a" style="left:675px;top:557px;" width="20" height="20" viewBox="0 0 20 20"><g fill="none" stroke="#d0d0d0" stroke-width="1.5"><path d="M11 6 L3 14 L2.5 17.5 L6 17 L14 9"/></g><path d="M12 3 a2.5 2.5 0 0 1 5 5 l-2 2 -5-5z" fill="#d0d0d0"/><path d="M10 4.5 L15.5 10" stroke="#d0d0d0" stroke-width="1.8"/></svg>
<div class="a t" style="left:438px;top:595.0px;font-size:12.5px;line-height:18px;color:#a6a6a6;transform:scaleX(0.924);transform-origin:left center">BG 2 Transparency</div>
<div class="a t" style="left:589.5px;top:595.5px;font-size:12.5px;line-height:18px;color:#4a9cf0;transform:scaleX(0.916);transform-origin:left center">100 <span style="color:#a6a6a6">%</span></div>
<div class="a" style="left:680px;top:603px;width:237px;height:2px;background:#3a3a3a"></div>
<svg class="a" style="left:918.5px;top:594.5px;" width="19" height="19" viewBox="0 0 19 19"><circle cx="9.5" cy="9.5" r="8" stroke="#bcbcbc" stroke-width="2" fill="#1e1e1e"/></svg>
<div class="a" style="left:431.5px;top:630.5px;width:138.5px;height:21.5px;background:#141414;border-radius:3px;box-shadow:0 0 0 1px #2e2e2e"></div>
<div class="a t" style="left:438px;top:632.8px;font-size:12.5px;line-height:18px;color:#d8d8d8;transform:scaleX(0.894);transform-origin:left center">BG 2 Scale</div>
<div class="a t" style="left:589.5px;top:631.0px;font-size:12.5px;line-height:18px;color:#4a9cf0;transform:scaleX(0.896);transform-origin:left center">100.0 , 100.0 <span style="color:#a6a6a6">%</span></div>
<div class="a" style="left:397.5px;top:726px;width:152px;height:20.5px;background:#1c1c1c;border-radius:3px;box-shadow:0 0 0 1px #2a2a2a"></div>
<div class="a t" style="left:404.5px;top:727.5px;font-size:13px;line-height:18px;color:#d0d0d0;letter-spacing:0.17px;width:102.0px;clip-path:inset(-12px 0 -12px -12px)">書式設定を追加</div>
<svg class="a" style="left:533.5px;top:733.0px;" width="10.0" height="6.0" viewBox="0 0 10.0 6.0"><path d="M1.0 1.0 L5.0 5.0 L9.0 1.0" stroke="#c8c8c8" stroke-width="1.5" fill="none"/></svg>
<div class="a" style="left:603.5px;top:725px;width:349px;height:22.5px;border:2px solid #8e8e8e;border-radius:11px;box-sizing:border-box"></div>
<div class="a t" style="left:624.5px;top:727.5px;font-size:13px;line-height:18px;color:#a8a8a8;letter-spacing:-0.07px;width:318.0px;clip-path:inset(-12px 0 -12px -12px)">モーショングラフィックステンプレートを書き出し...</div>
<div class="a" style="left:966px;top:53px;width:769px;height:714px;background:#272727"></div>
<svg class="a" style="left:978px;top:66px;" width="9" height="9" viewBox="0 0 9 9"><path d="M1 1 L8 8 M8 1 L1 8" stroke="#a0a0a0" stroke-width="1.3"/></svg>
<div class="a" style="left:997px;top:63px;width:13px;height:12px;background:#b5a589"></div>
<svg class="a" style="left:1021px;top:60px;" width="13" height="15" viewBox="0 0 13 15"><rect x="1" y="6.5" width="11" height="8" rx="1" fill="#c8c8c8"/><path d="M3.5 6.5 v-2.5 a3 3 0 0 1 6 0" stroke="#c8c8c8" stroke-width="1.6" fill="none"/><rect x="6" y="9" width="1.5" height="3" fill="#272727"/></svg>
<div class="a t" style="left:1043.5px;top:61.5px;font-size:13px;line-height:18px;color:#a8a8a8;letter-spacing:-0.17px;width:100.0px;clip-path:inset(-12px 0 -12px -12px)">コンポジション</div>
<div class="a t" style="left:1138.5px;top:62.0px;font-size:13px;line-height:18px;color:#4a9cf0;transform:scaleX(0.910);transform-origin:left center">Left-1Line-LT</div>
<svg class="a" style="left:1216px;top:66px;" width="11" height="10" viewBox="0 0 11 10"><g fill="#d0d0d0"><rect x="0" y="0" width="11" height="1.6"/><rect x="0" y="4.2" width="11" height="1.6"/><rect x="0" y="8.4" width="11" height="1.6"/></g></svg>
<div class="a" style="left:979px;top:82.5px;width:249px;height:2.5px;background:#c8c8c8;border-radius:1px"></div>
<div class="a" style="left:1270px;top:63px;width:13px;height:12px;background:#c14141"></div>
<div class="a t" style="left:1295px;top:61.5px;font-size:13px;line-height:18px;color:#a8a8a8;letter-spacing:-0.24px;width:155.0px;clip-path:inset(-12px 0 -12px -12px)">レイヤー ホワイト 平面 1</div>
<div class="a" style="left:991px;top:90.5px;width:105.5px;height:19px;background:#1a1a1a;border-radius:3px"></div>
<div class="a t" style="left:1000.5px;top:91.0px;font-size:12.5px;line-height:18px;color:#4a9cf0;transform:scaleX(0.947);transform-origin:left center">Left-1Line-LT</div>
<div class="a" style="left:966px;top:113.5px;width:769px;height:2px;background:#1a1a1a"></div>
<div class="a" style="left:966px;top:115.5px;width:769px;height:625px;background:#232323"></div>
<div class="a" style="left:972px;top:215px;width:756px;height:426px;background:#ffffff"></div>
<div class="a" style="left:1010px;top:234.8px;width:681px;height:387px;border:1.6px solid #000;box-sizing:border-box"></div>
<div class="a" style="left:1048px;top:256px;width:605px;height:344.5px;border:1.6px solid #2a2a2a;box-sizing:border-box"></div>
<div class="a" style="left:1095.6px;top:256px;width:1.6px;height:344px;background:#1a1a1a"></div>
<div class="a" style="left:1122.8px;top:256px;width:1.6px;height:344px;background:#1a1a1a"></div>
<div class="a" style="left:1576.6px;top:256px;width:1.6px;height:344px;background:#1a1a1a"></div>
<div class="a" style="left:1603.8px;top:256px;width:1.6px;height:344px;background:#1a1a1a"></div>
<div class="a" style="left:1350px;top:235px;width:2px;height:13px;background:#111"></div>
<div class="a" style="left:1350px;top:608px;width:2px;height:13px;background:#111"></div>
<div class="a" style="left:1011px;top:426px;width:20px;height:2px;background:#111"></div>
<div class="a" style="left:1671px;top:426px;width:20px;height:2px;background:#111"></div>
<div class="a" style="left:1340.5px;top:426.8px;width:21px;height:1.4px;background:#111"></div>
<div class="a" style="left:1350.3px;top:417px;width:1.4px;height:21px;background:#111"></div>
<div class="a" style="left:988px;top:587.5px;width:118px;height:2.5px;background:#f4a01a"></div>
<div class="a" style="left:1106px;top:587.5px;width:261px;height:2.5px;background:#e8c662"></div>
<div class="a t" style="left:998.5px;top:593.0px;font-size:23px;line-height:32px;color:#ffffff;-webkit-text-stroke:0.7px #fff;text-shadow:0 0 2px rgba(0,0,0,0.9),0 0 4px rgba(0,0,0,0.8),1px 2px 6px rgba(0,0,0,0.6);letter-spacing:-1.27px;width:526.0px;clip-path:inset(-12px 0 -12px -12px)">一見、パリのルーブル美術館に見えてしまいますが</div>
<div class="a" style="left:966px;top:740px;width:769px;height:27px;background:#272727;border-top:2px solid #1a1a1a;box-sizing:border-box"></div>
<svg class="a" style="left:973px;top:745px;" width="18" height="16" viewBox="0 0 18 16"><g fill="#c8c8c8"><rect x="1" y="1" width="10" height="8"/><rect x="5" y="5" width="11" height="9" stroke="#272727" stroke-width="1.2"/></g></svg>
<svg class="a" style="left:998px;top:745px;" width="18" height="16" viewBox="0 0 18 16"><rect x="1.5" y="1.5" width="14" height="9" stroke="#c8c8c8" stroke-width="1.5" fill="none"/><rect x="6" y="12" width="5" height="2" fill="#c8c8c8"/><rect x="3.5" y="14" width="10" height="1.5" fill="#c8c8c8"/></svg>
<svg class="a" style="left:1023px;top:745px;" width="22" height="17" viewBox="0 0 22 17"><path d="M1 3 q10-4 20 0 v4 q-1 6 -5 5 q-3 0 -5-3 q-2 3 -5 3 q-4 1 -5-5z" fill="#c8c8c8"/><circle cx="6.5" cy="6" r="2" fill="#272727"/><circle cx="15.5" cy="6" r="2" fill="#272727"/><path d="M13 13 h5 l-2.5 3z" fill="#c8c8c8"/></svg>
<div class="a" style="left:1048px;top:744px;width:80px;height:20px;background:#1c1c1c;border-radius:3px"></div>
<div class="a t" style="left:1053.5px;top:744.5px;font-size:12.5px;line-height:18px;color:#c0c0c0;transform:scaleX(0.995);transform-origin:left center">(66.1 %)</div>
<svg class="a" style="left:1113.0px;top:750.0px;" width="10.0" height="6.0" viewBox="0 0 10.0 6.0"><path d="M1.0 1.0 L5.0 5.0 L9.0 1.0" stroke="#c0c0c0" stroke-width="1.5" fill="none"/></svg>
<svg class="a" style="left:1133px;top:744px;" width="20" height="19" viewBox="0 0 20 19"><g fill="none" stroke="#c8c8c8" stroke-width="1.4"><rect x="3" y="4" width="13" height="9"/><path d="M9.5 1 v15 M1 8.5 h17"/></g><path d="M13 15 h5 l-2.5 3z" fill="#c8c8c8"/></svg>
<div class="a" style="left:1157.5px;top:743px;width:23px;height:21px;background:#1a1a1a;border-radius:3px"></div>
<svg class="a" style="left:1160px;top:745px;" width="18" height="17" viewBox="0 0 18 17"><path d="M3 2 L15 3 L16 14 L2 15z" stroke="#3d8de8" stroke-width="1.6" fill="none"/><g fill="#3d8de8"><rect x="1" y="0.5" width="3.5" height="3.5"/><rect x="13.5" y="1.5" width="3.5" height="3.5"/><rect x="14.5" y="12" width="3.5" height="3.5"/><rect x="0.5" y="13" width="3.5" height="3.5"/></g></svg>
<div class="a" style="left:1184.5px;top:743px;width:80px;height:21px;background:#1c1c1c;border-radius:3px"></div>
<div class="a t" style="left:1196px;top:744.5px;font-size:12.5px;line-height:18px;color:#a8a8a8;transform:scaleX(0.943);transform-origin:left center">0:00:01:10</div>
<svg class="a" style="left:1269px;top:745px;" width="19" height="16" viewBox="0 0 19 16"><path d="M1 4 h4 l2-3 h5 l2 3 h4 v11 h-17z" fill="#c8c8c8"/><circle cx="9.5" cy="9" r="3.5" fill="#272727"/><circle cx="9.5" cy="9" r="2" fill="#c8c8c8"/></svg>
<svg class="a" style="left:1295px;top:744px;" width="19" height="18" viewBox="0 0 19 18"><g fill="none" stroke="#4a4a4a" stroke-width="1.5"><circle cx="12" cy="6" r="4"/><circle cx="7" cy="11" r="5"/></g></svg>
<svg class="a" style="left:1321px;top:743px;" width="20" height="20" viewBox="0 0 20 20"><circle cx="9" cy="5.5" r="4.2" fill="#e23b3b"/><circle cx="5" cy="11" r="4.2" fill="#2fb04a"/><circle cx="13" cy="11" r="4.2" fill="#3d7de8"/><path d="M14 16 h5 l-2.5 3z" fill="#c8c8c8"/></svg>
<div class="a" style="left:1345px;top:743px;width:103px;height:21px;background:#1c1c1c;border-radius:3px"></div>
<div class="a t" style="left:1353px;top:744.5px;font-size:13px;line-height:18px;color:#c0c0c0;letter-spacing:-0.67px;width:60.0px;clip-path:inset(-12px 0 -12px -12px)">フル画質</div>
<svg class="a" style="left:1433.0px;top:750.0px;" width="10.0" height="6.0" viewBox="0 0 10.0 6.0"><path d="M1.0 1.0 L5.0 5.0 L9.0 1.0" stroke="#c0c0c0" stroke-width="1.5" fill="none"/></svg>
<svg class="a" style="left:1453px;top:744px;" width="19" height="17" viewBox="0 0 19 17"><rect x="1" y="1" width="17" height="15" stroke="#c8c8c8" stroke-width="1.6" fill="none"/><rect x="5" y="4.5" width="9" height="8" fill="#c8c8c8"/></svg>
<svg class="a" style="left:1480px;top:744px;" width="19" height="17" viewBox="0 0 19 17"><rect x="1" y="1" width="17" height="15" stroke="#c8c8c8" stroke-width="1.6" fill="none"/><g fill="#8a8a8a"><rect x="3" y="3" width="3" height="3"/><rect x="9" y="3" width="3" height="3"/><rect x="6" y="6" width="3" height="3"/><rect x="12" y="6" width="3" height="3"/><rect x="3" y="9" width="3" height="3"/><rect x="9" y="9" width="3" height="3"/><rect x="6" y="12" width="3" height="2"/><rect x="12" y="12" width="3" height="2"/></g></svg>
<div class="a" style="left:1504px;top:743px;width:125.5px;height:21px;background:#1c1c1c;border-radius:3px"></div>
<div class="a t" style="left:1511.5px;top:744.5px;font-size:13px;line-height:18px;color:#c0c0c0;letter-spacing:-0.36px;width:96.0px;clip-path:inset(-12px 0 -12px -12px)">アクティブカ...</div>
<svg class="a" style="left:1614.0px;top:750.0px;" width="10.0" height="6.0" viewBox="0 0 10.0 6.0"><path d="M1.0 1.0 L5.0 5.0 L9.0 1.0" stroke="#c0c0c0" stroke-width="1.5" fill="none"/></svg>
<div class="a" style="left:1633.5px;top:743px;width:84px;height:21px;background:#1c1c1c;border-radius:3px"></div>
<div class="a t" style="left:1641px;top:744.5px;font-size:13px;line-height:18px;color:#c0c0c0">1</div>
<div class="a t" style="left:1650.4px;top:744.5px;font-size:13px;line-height:18px;color:#c0c0c0;letter-spacing:1.20px;width:37.2px;clip-path:inset(-12px 0 -12px -12px)">画面</div>
<svg class="a" style="left:1702.0px;top:750.0px;" width="10.0" height="6.0" viewBox="0 0 10.0 6.0"><path d="M1.0 1.0 L5.0 5.0 L9.0 1.0" stroke="#c0c0c0" stroke-width="1.5" fill="none"/></svg>
<svg class="a" style="left:1723px;top:745px;" width="12" height="17" viewBox="0 0 12 17"><g fill="none" stroke="#c8c8c8" stroke-width="1.4"><path d="M6 1 L2 4 L6 7 M2 4 h8 M3 8 v7 h9 M6 11 h6"/></g></svg>
<div class="a" style="left:1739px;top:53px;width:246px;height:714px;background:#272727"></div>
<div class="a" style="left:1985px;top:53px;width:15px;height:714px;background:#1e1e1e"></div>
<div class="a t" style="left:1754px;top:61.5px;font-size:13px;line-height:18px;color:#a6a6a6;letter-spacing:1.00px;width:37.0px;clip-path:inset(-12px 0 -12px -12px)">情報</div>
<div class="a t" style="left:1754px;top:97.3px;font-size:13px;line-height:18px;color:#a6a6a6;letter-spacing:-0.50px;width:73.0px;clip-path:inset(-12px 0 -12px -12px)">オーディオ</div>
<div class="a t" style="left:1754px;top:133.0px;font-size:13px;line-height:18px;color:#a6a6a6;letter-spacing:-0.50px;width:73.0px;clip-path:inset(-12px 0 -12px -12px)">プレビュー</div>
<div class="a t" style="left:1754px;top:168.2px;font-size:13px;line-height:18px;color:#a6a6a6;letter-spacing:-0.20px;width:151.0px;clip-path:inset(-12px 0 -12px -12px)">エフェクト＆プリセット</div>
<div class="a" style="left:1741px;top:85.5px;width:242px;height:2px;background:#171717"></div>
<div class="a" style="left:1741px;top:121.3px;width:242px;height:2px;background:#171717"></div>
<div class="a" style="left:1741px;top:157px;width:242px;height:2px;background:#171717"></div>
<div class="a" style="left:1741px;top:192.6px;width:242px;height:2px;background:#171717"></div>
<div class="a t" style="left:1754px;top:204.0px;font-size:13px;line-height:18px;color:#d6d6d6;letter-spacing:1.00px;width:37.0px;clip-path:inset(-12px 0 -12px -12px)">整列</div>
<svg class="a" style="left:1961px;top:208px;" width="11" height="10" viewBox="0 0 11 10"><g fill="#d0d0d0"><rect x="0" y="0" width="11" height="1.6"/><rect x="0" y="4.2" width="11" height="1.6"/><rect x="0" y="8.4" width="11" height="1.6"/></g></svg>
<div class="a t" style="left:1748px;top:235.5px;font-size:13px;line-height:18px;color:#a6a6a6;letter-spacing:-0.28px;width:106.0px;clip-path:inset(-12px 0 -12px -12px)">レイヤーを整列 :</div>
<div class="a" style="left:1850px;top:234.5px;width:131.5px;height:20px;background:#262626;border-radius:2px"></div>
<div class="a t" style="left:1858.5px;top:235.0px;font-size:13px;line-height:18px;color:#585858;letter-spacing:-0.67px;width:60.0px;clip-path:inset(-12px 0 -12px -12px)">選択範囲</div>
<svg class="a" style="left:1965.5px;top:241.0px;" width="10.0" height="6.0" viewBox="0 0 10.0 6.0"><path d="M1.0 1.0 L5.0 5.0 L9.0 1.0" stroke="#4a4a4a" stroke-width="1.5" fill="none"/></svg>
<svg class="a" style="left:1752px;top:261px;" width="20" height="21" viewBox="0 0 20 21"><g fill="#4b4b4b"><rect x="1" y="0" width="1.5" height="21"/><rect x="4" y="3" width="10" height="6"/><rect x="4" y="12" width="16" height="6"/></g></svg>
<svg class="a" style="left:1793px;top:261px;" width="20" height="21" viewBox="0 0 20 21"><g fill="#4b4b4b"><rect x="9.25" y="0" width="1.5" height="21"/><rect x="5" y="3" width="10" height="6"/><rect x="2" y="12" width="16" height="6"/></g></svg>
<svg class="a" style="left:1834.5px;top:261px;" width="20" height="21" viewBox="0 0 20 21"><g fill="#4b4b4b"><rect x="17.5" y="0" width="1.5" height="21"/><rect x="6" y="3" width="10" height="6"/><rect x="0" y="12" width="16" height="6"/></g></svg>
<svg class="a" style="left:1873.5px;top:261px;" width="22" height="21" viewBox="0 0 22 21"><g fill="#4b4b4b"><rect x="0" y="1" width="21" height="1.5"/><rect x="3" y="4" width="6" height="16"/><rect x="12" y="4" width="6" height="10"/></g></svg>
<svg class="a" style="left:1914px;top:261px;" width="22" height="21" viewBox="0 0 22 21"><g fill="#4b4b4b"><rect x="0" y="9.5" width="21" height="1.5"/><rect x="3" y="2" width="6" height="16"/><rect x="12" y="5" width="6" height="10"/></g></svg>
<svg class="a" style="left:1955px;top:261px;" width="22" height="21" viewBox="0 0 22 21"><g fill="#4b4b4b"><rect x="0" y="18.5" width="21" height="1.5"/><rect x="3" y="2" width="6" height="16"/><rect x="12" y="8" width="6" height="10"/></g></svg>
<div class="a" style="left:1747px;top:288.5px;width:230px;height:1px;background:#2c2c2c"></div>
<div class="a t" style="left:1748px;top:292.5px;font-size:13px;line-height:18px;color:#a6a6a6;letter-spacing:-0.28px;width:106.0px;clip-path:inset(-12px 0 -12px -12px)">レイヤーを配置 :</div>
<svg class="a" style="left:1751px;top:313px;" width="22" height="22" viewBox="0 0 22 22"><g fill="#4b4b4b"><rect x="0" y="1" width="22" height="1.5"/><rect x="5" y="4" width="10" height="4"/><rect x="0" y="11" width="22" height="1.5"/><rect x="3" y="14" width="16" height="6"/></g></svg>
<svg class="a" style="left:1792px;top:313px;" width="22" height="22" viewBox="0 0 22 22"><g fill="#4b4b4b"><rect x="6" y="2" width="10" height="5"/><rect x="0" y="4" width="22" height="1.5"/><rect x="3" y="12" width="16" height="6"/><rect x="0" y="14.5" width="22" height="1.5"/></g></svg>
<svg class="a" style="left:1833.5px;top:313px;" width="22" height="22" viewBox="0 0 22 22"><g fill="#4b4b4b"><rect x="6" y="2" width="10" height="5"/><rect x="0" y="8" width="22" height="1.5"/><rect x="3" y="12" width="16" height="6"/><rect x="0" y="19" width="22" height="1.5"/></g></svg>
<svg class="a" style="left:1873.5px;top:313px;" width="22" height="22" viewBox="0 0 22 22"><g fill="#4b4b4b"><rect x="1" y="0" width="1.5" height="22"/><rect x="4" y="3" width="5" height="16"/><rect x="12" y="0" width="1.5" height="22"/><rect x="15" y="6" width="5" height="10"/></g></svg>
<svg class="a" style="left:1914px;top:313px;" width="22" height="22" viewBox="0 0 22 22"><g fill="#4b4b4b"><rect x="3" y="3" width="6" height="16"/><rect x="5.25" y="0" width="1.5" height="22"/><rect x="13" y="6" width="6" height="10"/><rect x="15.25" y="0" width="1.5" height="22"/></g></svg>
<svg class="a" style="left:1955px;top:313px;" width="22" height="22" viewBox="0 0 22 22"><g fill="#4b4b4b"><rect x="3" y="3" width="6" height="16"/><rect x="10" y="0" width="1.5" height="22"/><rect x="13" y="6" width="6" height="10"/><rect x="20" y="0" width="1.5" height="22"/></g></svg>
<div class="a" style="left:1741px;top:351.5px;width:242px;height:2px;background:#171717"></div>
<div class="a" style="left:1741px;top:387px;width:242px;height:2px;background:#171717"></div>
<div class="a" style="left:1741px;top:422.5px;width:242px;height:2px;background:#171717"></div>
<div class="a" style="left:1741px;top:458.4px;width:242px;height:2px;background:#171717"></div>
<div class="a" style="left:1741px;top:494px;width:242px;height:2px;background:#171717"></div>
<div class="a" style="left:1741px;top:530px;width:242px;height:2px;background:#171717"></div>
<div class="a" style="left:1741px;top:565.6px;width:242px;height:2px;background:#171717"></div>
<div class="a" style="left:1741px;top:601.5px;width:242px;height:2px;background:#171717"></div>
<div class="a" style="left:1741px;top:637.2px;width:242px;height:2px;background:#171717"></div>
<div class="a t" style="left:1754px;top:398.5px;font-size:13px;line-height:18px;color:#a6a6a6;letter-spacing:-2.00px;width:67.0px;clip-path:inset(-12px 0 -12px -12px)">トラッカー</div>
<div class="a t" style="left:1754px;top:434.2px;font-size:13px;line-height:18px;color:#a6a6a6;letter-spacing:-0.08px;width:191.0px;clip-path:inset(-12px 0 -12px -12px)">コンテンツに応じた塗りつぶし</div>
<div class="a t" style="left:1754px;top:469.8px;font-size:13px;line-height:18px;color:#a6a6a6;letter-spacing:-0.50px;width:73.0px;clip-path:inset(-12px 0 -12px -12px)">スムーザー</div>
<div class="a t" style="left:1754px;top:505.3px;font-size:13px;line-height:18px;color:#a6a6a6;letter-spacing:-0.50px;width:48.0px;clip-path:inset(-12px 0 -12px -12px)">ブラシ</div>
<div class="a t" style="left:1754px;top:541.5px;font-size:13px;line-height:18px;color:#a6a6a6;letter-spacing:-0.33px;width:61.0px;clip-path:inset(-12px 0 -12px -12px)">ペイント</div>
<div class="a t" style="left:1754px;top:577.4px;font-size:13px;line-height:18px;color:#a6a6a6;letter-spacing:0.00px;width:36.0px;clip-path:inset(-12px 0 -12px -12px)">段落</div>
<div class="a t" style="left:1754px;top:613.3px;font-size:13px;line-height:18px;color:#a6a6a6;letter-spacing:0.00px;width:36.0px;clip-path:inset(-12px 0 -12px -12px)">文字</div>
<div class="a t" style="left:1753.5px;top:361.3px;font-size:13.5px;line-height:19px;color:#a6a6a6;transform:scaleX(1.000);transform-origin:left center">CC</div>
<div class="a t" style="left:1778.6px;top:361.8px;font-size:13px;line-height:18px;color:#a6a6a6;letter-spacing:-2.10px;width:66.6px;clip-path:inset(-12px 0 -12px -12px)">ライブラリ</div>
<div class="a" style="left:0px;top:772px;width:2000px;height:452px;background:#161616"></div>
<div class="a" style="left:0px;top:772px;width:1999px;height:452px;background:#272727;border:1.5px solid #3f7ad6;box-sizing:border-box"></div>
<div class="a" style="left:2px;top:1027px;width:996px;height:176px;background:#262626"></div>
<div class="a t" style="left:34.5px;top:779.5px;font-size:13px;line-height:18px;color:#9c9c9c;letter-spacing:-0.50px;width:98.0px;clip-path:inset(-12px 0 -12px -12px)">レンダーキュー</div>
<div class="a" style="left:188.5px;top:782.5px;width:12px;height:11px;background:#b5a589"></div>
<div class="a t" style="left:213.5px;top:779.5px;font-size:13px;line-height:18px;color:#a6a6a6;transform:scaleX(0.882);transform-origin:left center">Logo</div>
<div class="a" style="left:305px;top:782.5px;width:12px;height:11px;background:#b5a589"></div>
<div class="a t" style="left:330px;top:779.5px;font-size:13px;line-height:18px;color:#a6a6a6;transform:scaleX(0.874);transform-origin:left center">Ending-SNS</div>
<svg class="a" style="left:438px;top:785px;" width="8" height="8" viewBox="0 0 8 8"><path d="M1 1 L7 7 M7 1 L1 7" stroke="#a0a0a0" stroke-width="1.3"/></svg>
<div class="a" style="left:457.5px;top:782.5px;width:12px;height:11px;background:#b5a589"></div>
<div class="a t" style="left:482.5px;top:779.5px;font-size:13px;line-height:18px;color:#d8d8d8;transform:scaleX(0.917);transform-origin:left center">Left-1Line-LT</div>
<svg class="a" style="left:563.5px;top:784px;" width="10" height="10" viewBox="0 0 10 10"><g fill="#d0d0d0"><rect x="0" y="0" width="10" height="1.6"/><rect x="0" y="4.2" width="10" height="1.6"/><rect x="0" y="8.4" width="10" height="1.6"/></g></svg>
<div class="a" style="left:439px;top:800.5px;width:135px;height:2.5px;background:#c8c8c8;border-radius:1px"></div>
<div class="a t" style="left:34px;top:806.5px;font-size:17px;line-height:24px;color:#4a9cf0;font-weight:bold;letter-spacing:0.59px;width:98.5px;clip-path:inset(-12px 0 -12px -12px)">0:00:01:10</div>
<div class="a t" style="left:15px;top:825.5px;font-size:14px;line-height:20px;color:#3d86d8;letter-spacing:0.65px;width:138.5px;clip-path:inset(-12px 0 -12px -12px)">00034 (23.976 fps)</div>
<div class="a" style="left:158px;top:813.5px;width:599.5px;height:23px;background:#161616;border-radius:4px;box-shadow:0 0 0 1px #2a2a2a"></div>
<svg class="a" style="left:166px;top:818px;" width="20" height="13" viewBox="0 0 20 13"><circle cx="8" cy="5" r="3.8" stroke="#c0c0c0" stroke-width="1.4" fill="none"/><path d="M5.3 7.8 L1 12" stroke="#c0c0c0" stroke-width="1.6"/><path d="M12 8 h6 l-3 3z" fill="#c0c0c0"/></svg>
<svg class="a" style="left:775px;top:817px;" width="22" height="19" viewBox="0 0 22 19"><g fill="#c8c8c8"><circle cx="2" cy="3.5" r="2"/><rect x="2" y="2.6" width="9" height="1.8"/><rect x="8" y="2.6" width="1.8" height="10"/><rect x="8" y="7" width="6" height="1.8"/><rect x="8" y="11" width="6" height="1.8"/><rect x="13" y="5.5" width="4" height="4.5"/><rect x="13" y="10" width="4" height="4"/></g><path d="M15 15 h6 l-3 3.5z" fill="#c8c8c8"/></svg>
<svg class="a" style="left:815px;top:813px;" width="22" height="22" viewBox="0 0 22 22"><g fill="#c8c8c8"><path d="M4 0 l1 3 3 1 -3 1 -1 3 -1-3 -3-1 3-1z"/></g><path d="M9 9 l6-3 6 3 v7 l-6 3 -6-3z" stroke="#c8c8c8" stroke-width="1.5" fill="none"/><path d="M9 9 l6 3 6-3 M15 12 v7" stroke="#c8c8c8" stroke-width="1.2" fill="none"/></svg>
<svg class="a" style="left:856px;top:815px;" width="20" height="18" viewBox="0 0 20 18"><path d="M1 8 Q10 -1 19 8z" fill="#c8c8c8"/><rect x="9" y="8" width="2.2" height="9" fill="#c8c8c8"/><rect x="3" y="11" width="4" height="4" fill="#c8c8c8"/><rect x="13" y="11" width="4" height="4" fill="#c8c8c8"/></svg>
<svg class="a" style="left:888px;top:815px;" width="19" height="19" viewBox="0 0 19 19"><g fill="#c8c8c8"><rect x="6" y="0" width="12" height="13"/><rect x="3" y="3" width="12" height="13" stroke="#272727" stroke-width="1.2"/><rect x="0" y="6" width="12" height="13" stroke="#272727" stroke-width="1.2"/></g></svg>
<svg class="a" style="left:918px;top:815px;" width="21" height="19" viewBox="0 0 21 19"><circle cx="12" cy="8" r="7" fill="#3d8de8"/><circle cx="9" cy="11" r="7" fill="#2a6fc8" stroke="#272727" stroke-width="1.4"/><circle cx="8" cy="12" r="5.5" fill="#3d8de8" stroke="#272727" stroke-width="1.2"/></svg>
<svg class="a" style="left:959px;top:814px;" width="21" height="21" viewBox="0 0 21 21"><rect x="1" y="4" width="19" height="15" stroke="#c8c8c8" stroke-width="1.6" fill="none"/><g fill="#c8c8c8"><rect x="4" y="1" width="1.6" height="4"/><rect x="9.5" y="1" width="1.6" height="4"/><rect x="15" y="1" width="1.6" height="4"/></g><path d="M4 8 C9 8 10 16 17 16" stroke="#c8c8c8" stroke-width="1.5" fill="none"/></svg>
<div class="a" style="left:2px;top:847.5px;width:996px;height:21.5px;background:#343434"></div>
<div class="a" style="left:2px;top:868.5px;width:996px;height:2px;background:#111"></div>
<svg class="a" style="left:7px;top:853.5px;" width="16" height="10" viewBox="0 0 16 10"><path d="M0.5 5 Q8 -3 15.5 5 Q8 13 0.5 5z" fill="#c8c8c8"/><circle cx="8" cy="5" r="3" fill="#262626"/><circle cx="7.2" cy="4.3" r="1.2" fill="#c8c8c8"/></svg>
<svg class="a" style="left:26px;top:851px;" width="15" height="15" viewBox="0 0 15 15"><path d="M1 5 h3 l4-4 v13 l-4-4 h-3z" fill="#c8c8c8"/><path d="M10 4 q3 3.5 0 7 M12 2 q5 5.5 0 11" stroke="#c8c8c8" stroke-width="1.4" fill="none"/></svg>
<svg class="a" style="left:45px;top:853px;" width="11" height="11" viewBox="0 0 11 11"><circle cx="5.5" cy="5.5" r="4.5" fill="#c8c8c8"/></svg>
<svg class="a" style="left:62px;top:850px;" width="13" height="15" viewBox="0 0 13 15"><rect x="1" y="6.5" width="11" height="8" fill="#c8c8c8"/><path d="M3.5 6.5 v-2.5 a3 3 0 0 1 6 0 v2.5" stroke="#c8c8c8" stroke-width="1.6" fill="none"/><rect x="5.8" y="9" width="1.5" height="3" fill="#343434"/></svg>
<div class="a" style="left:83.5px;top:852px;width:1px;height:13px;background:#444"></div>
<div class="a" style="left:120.5px;top:852px;width:1px;height:13px;background:#444"></div>
<div class="a" style="left:159.5px;top:852px;width:1px;height:13px;background:#444"></div>
<div class="a" style="left:422px;top:852px;width:1px;height:13px;background:#444"></div>
<div class="a" style="left:620px;top:852px;width:1px;height:13px;background:#444"></div>
<div class="a" style="left:820px;top:852px;width:1px;height:13px;background:#444"></div>
<div class="a" style="left:980px;top:852px;width:1px;height:13px;background:#444"></div>
<svg class="a" style="left:98px;top:851px;" width="15" height="15" viewBox="0 0 15 15"><path d="M1 1.5 h6.5 l6.5 6.5 -6 6 -7-7z" fill="#c4c4c4"/><circle cx="4.5" cy="5" r="1.3" fill="#343434"/></svg>
<div class="a t" style="left:128.5px;top:849.5px;font-size:13px;line-height:18px;color:#9c9c9c">#</div>
<div class="a t" style="left:167.5px;top:849.5px;font-size:13px;line-height:18px;color:#9c9c9c;letter-spacing:1.00px;width:79.0px;clip-path:inset(-12px 0 -12px -12px)">レイヤー名</div>
<div class="a t" style="left:429px;top:849.0px;font-size:13px;line-height:18px;color:#9c9c9c;letter-spacing:0.50px;width:50.0px;clip-path:inset(-12px 0 -12px -12px)">モード</div>
<div class="a t" style="left:518px;top:849.5px;font-size:13px;line-height:18px;color:#9c9c9c">T</div>
<div class="a t" style="left:539px;top:850.5px;font-size:11px;line-height:15px;color:#9c9c9c;font-size:11px;letter-spacing:-4.50px;width:60.0px;clip-path:inset(-12px 0 -12px -12px)">トラックマット</div>
<svg class="a" style="left:624px;top:851px;" width="18" height="14" viewBox="0 0 18 14"><path d="M1 6 Q8 -1 15 6z" fill="#c8c8c8"/><rect x="7" y="6" width="2" height="7" fill="#c8c8c8"/><circle cx="5" cy="10" r="1.8" fill="#c8c8c8"/><circle cx="11" cy="10" r="1.8" fill="#c8c8c8"/></svg>
<svg class="a" style="left:643px;top:851px;" width="14" height="14" viewBox="0 0 14 14"><circle cx="7" cy="7" r="2.8" fill="#c8c8c8"/><g stroke="#c8c8c8" stroke-width="1.3"><path d="M7 0 v3 M7 11 v3 M0 7 h3 M11 7 h3 M2 2 l2 2 M10 10 l2 2 M12 2 l-2 2 M2 12 l2-2"/></g></svg>
<svg class="a" style="left:661px;top:851px;" width="14" height="14" viewBox="0 0 14 14"><path d="M2 1 L13 13" stroke="#c8c8c8" stroke-width="1.6"/><path d="M1 1 h5" stroke="#c8c8c8" stroke-width="1.2"/></svg>
<div class="a t" style="left:678px;top:847.0px;font-size:16px;line-height:22px;color:#c8c8c8;font-family:Liberation Serif"><i>fx</i></div>
<svg class="a" style="left:695px;top:851px;" width="14" height="14" viewBox="0 0 14 14"><rect x="1" y="1" width="12" height="12" stroke="#c8c8c8" stroke-width="1.4" fill="none"/><path d="M1 4 h12 M1 7 h12 M1 10 h12" stroke="#c8c8c8" stroke-width="1"/></svg>
<svg class="a" style="left:713px;top:850.5px;" width="18" height="16" viewBox="0 0 18 16"><circle cx="11" cy="6.5" r="5.5" fill="#bcbcbc"/><circle cx="8.5" cy="9" r="5.5" fill="#8a8a8a" stroke="#262626" stroke-width="1"/><circle cx="6" cy="11" r="4.5" fill="#bcbcbc" stroke="#262626" stroke-width="1"/></svg>
<svg class="a" style="left:731px;top:851px;" width="14" height="14" viewBox="0 0 14 14"><circle cx="7" cy="7" r="6" fill="#c8c8c8"/><path d="M7 1 A6 6 0 0 0 7 13z" fill="#343434"/></svg>
<svg class="a" style="left:750px;top:850px;" width="15" height="16" viewBox="0 0 15 16"><path d="M7.5 1 L14 4.5 V11.5 L7.5 15 L1 11.5 V4.5z M1 4.5 L7.5 8 L14 4.5 M7.5 8 V15" stroke="#c8c8c8" stroke-width="1.3" fill="none"/></svg>
<div class="a t" style="left:826px;top:849.0px;font-size:13px;line-height:18px;color:#9c9c9c;letter-spacing:1.38px;width:80.5px;clip-path:inset(-12px 0 -12px -12px)">親とリンク</div>
<div class="a" style="left:2px;top:870px;width:996px;height:21.5px;background:#313131"></div>
<div class="a" style="left:7px;top:873.5px;width:16px;height:15px;background:#222"></div>
<svg class="a" style="left:7px;top:876px;" width="16" height="10" viewBox="0 0 16 10"><path d="M0.5 5 Q8 -3 15.5 5 Q8 13 0.5 5z" fill="#c8c8c8"/><circle cx="8" cy="5" r="3" fill="#262626"/><circle cx="7.2" cy="4.3" r="1.2" fill="#c8c8c8"/></svg>
<div class="a" style="left:43px;top:873.5px;width:15px;height:15px;background:#202020"></div>
<div class="a" style="left:61px;top:873.5px;width:15px;height:15px;background:#202020"></div>
<svg class="a" style="left:89px;top:878.5px;" width="10" height="6" viewBox="0 0 10 6"><path d="M1 1 L5 5 L9 1" stroke="#bcbcbc" stroke-width="1.4" fill="none"/></svg>
<div class="a" style="left:103.5px;top:873px;width:17px;height:17px;background:#6e84e8;box-shadow:0 0 0 1px #1a1a1a"></div>
<div class="a t" style="left:128.5px;top:871.5px;font-size:14px;line-height:20px;color:#a6a6a6">1</div>
<svg class="a" style="left:164.0px;top:873.5px;" width="15" height="14" viewBox="0 0 15 14"><path d="M7.5 0.5 L9.3 5 L14.5 5.2 L10.4 8.3 L11.9 13.5 L7.5 10.5 L3.1 13.5 L4.6 8.3 L0.5 5.2 L5.7 5z" fill="#bcbcbc"/></svg>
<div class="a t" style="left:187.5px;top:871.5px;font-size:14px;line-height:20px;color:#bcbcbc;transform:scaleX(0.977);transform-origin:left center">Line-Orange</div>
<div class="a" style="left:426.5px;top:872px;width:81px;height:18px;background:#1c1c1c;border-radius:2px"></div>
<div class="a t" style="left:433px;top:872.0px;font-size:13px;line-height:18px;color:#d0d0d0;letter-spacing:1.00px;width:37.0px;clip-path:inset(-12px 0 -12px -12px)">通常</div>
<svg class="a" style="left:492.5px;top:878.0px;" width="10.0" height="6.0" viewBox="0 0 10.0 6.0"><path d="M1.0 1.0 L5.0 5.0 L9.0 1.0" stroke="#c0c0c0" stroke-width="1.5" fill="none"/></svg>
<div class="a" style="left:515px;top:873.5px;width:15px;height:15px;background:#202020"></div>
<div class="a" style="left:625px;top:873px;width:15px;height:16px;background:#222"></div>
<div class="a" style="left:643px;top:873px;width:15px;height:16px;background:#222"></div>
<div class="a" style="left:661px;top:873px;width:15px;height:16px;background:#222"></div>
<svg class="a" style="left:624.5px;top:874px;" width="16" height="14" viewBox="0 0 16 14"><path d="M1 6 Q8 -1 15 6z" fill="#bcbcbc"/><rect x="7" y="6" width="2" height="7" fill="#bcbcbc"/><circle cx="5" cy="10" r="1.8" fill="#bcbcbc"/><circle cx="11" cy="10" r="1.8" fill="#bcbcbc"/><path d="M1 6 h14" stroke="#262626" stroke-width="0.8"/></svg>
<svg class="a" style="left:643px;top:874px;" width="14" height="14" viewBox="0 0 14 14"><circle cx="7" cy="7" r="2.8" fill="#7a7a7a"/><g stroke="#7a7a7a" stroke-width="1.3"><path d="M7 0 v3 M7 11 v3 M0 7 h3 M11 7 h3 M2 2 l2 2 M10 10 l2 2 M12 2 l-2 2 M2 12 l2-2"/></g></svg>
<svg class="a" style="left:661.5px;top:874px;" width="14" height="14" viewBox="0 0 14 14"><path d="M2 13 L12 1" stroke="#c8c8c8" stroke-width="1.6"/></svg>
<svg class="a" style="left:712.5px;top:873px;" width="18" height="16" viewBox="0 0 18 16"><circle cx="11" cy="6.5" r="5.5" fill="#bcbcbc"/><circle cx="8.5" cy="9" r="5.5" fill="#8a8a8a" stroke="#262626" stroke-width="1"/><circle cx="6" cy="11" r="4.5" fill="#bcbcbc" stroke="#262626" stroke-width="1"/></svg>
<div class="a" style="left:732.5px;top:873px;width:15px;height:16px;background:#222"></div>
<div class="a" style="left:750px;top:873px;width:15px;height:16px;background:#222"></div>
<svg class="a" style="left:824.5px;top:873px;" width="16" height="16" viewBox="0 0 16 16"><path d="M8.5 8 a1 1 0 0 0 -2 0 a2.5 2.5 0 0 0 5 0 a4 4 0 0 0 -8 0 a5.5 5.5 0 0 0 11 0 a6 6 0 0 0 -3 -5" stroke="#c0c0c0" stroke-width="1.5" fill="none"/></svg>
<div class="a" style="left:848.5px;top:872px;width:124px;height:18px;background:#1c1c1c;border-radius:2px"></div>
<div class="a t" style="left:855px;top:872.0px;font-size:13px;line-height:18px;color:#d0d0d0;letter-spacing:1.00px;width:37.0px;clip-path:inset(-12px 0 -12px -12px)">なし</div>
<svg class="a" style="left:958.5px;top:878.0px;" width="10.0" height="6.0" viewBox="0 0 10.0 6.0"><path d="M1.0 1.0 L5.0 5.0 L9.0 1.0" stroke="#c0c0c0" stroke-width="1.5" fill="none"/></svg>
<div class="a" style="left:2px;top:891.5px;width:996px;height:1.2px;background:#202020"></div>
<div class="a" style="left:2px;top:892.5px;width:996px;height:21.5px;background:#252525"></div>
<svg class="a" style="left:9px;top:897.5px;" width="10" height="12" viewBox="0 0 10 12"><path d="M9 0.5 L1 6 L9 11.5z" fill="#c8c8c8"/></svg>
<svg class="a" style="left:26px;top:897.0px;" width="13" height="13" viewBox="0 0 13 13"><path d="M6.5 1 L12 6.5 L6.5 12 L1 6.5z" stroke="#c8c8c8" stroke-width="1.4" fill="none"/></svg>
<svg class="a" style="left:45px;top:897.5px;" width="10" height="12" viewBox="0 0 10 12"><path d="M1 0.5 L9 6 L1 11.5z" fill="#c8c8c8"/></svg>
<div class="a" style="left:151px;top:894.5px;width:17px;height:18px;background:#202020"></div>
<svg class="a" style="left:151px;top:894.5px;" width="16" height="17" viewBox="0 0 16 17"><circle cx="8" cy="10" r="6" stroke="#3d8de8" stroke-width="1.6" fill="none"/><rect x="5.5" y="0.5" width="5" height="1.8" fill="#3d8de8"/><rect x="7.2" y="2" width="1.6" height="2" fill="#3d8de8"/><path d="M8 10 L11 6.5" stroke="#3d8de8" stroke-width="1.6"/></svg>
<svg class="a" style="left:173px;top:896.5px;" width="16" height="14" viewBox="0 0 16 14"><path d="M1 0 v13 h14" stroke="#bcbcbc" stroke-width="1.4" fill="none"/><path d="M3 4 L6 10 L9 6 L12 10 L14 4" stroke="#bcbcbc" stroke-width="1.2" fill="none"/></svg>
<div class="a t" style="left:197.5px;top:894.5px;font-size:13px;line-height:18px;color:#bcbcbc;letter-spacing:-1.33px;width:58.0px;clip-path:inset(-12px 0 -12px -12px)">スケール</div>
<div class="a" style="left:624.5px;top:895.5px;width:15px;height:15px;background:#1c1c1c"></div>
<div class="a t" style="left:646.5px;top:894.0px;font-size:14px;line-height:20px;color:#4a9cf0;letter-spacing:0.84px;width:97.0px;clip-path:inset(-12px 0 -12px -12px)">31.0,100.0%</div>
<svg class="a" style="left:839.5px;top:895.5px;" width="16" height="16" viewBox="0 0 16 16"><path d="M8.5 8 a1 1 0 0 0 -2 0 a2.5 2.5 0 0 0 5 0 a4 4 0 0 0 -8 0 a5.5 5.5 0 0 0 11 0 a6 6 0 0 0 -3 -5" stroke="#c0c0c0" stroke-width="1.5" fill="none"/></svg>
<div class="a" style="left:2px;top:914.0px;width:996px;height:1.2px;background:#202020"></div>
<div class="a" style="left:2px;top:915px;width:996px;height:21.5px;background:#313131"></div>
<div class="a" style="left:7px;top:918.5px;width:16px;height:15px;background:#222"></div>
<svg class="a" style="left:7px;top:921px;" width="16" height="10" viewBox="0 0 16 10"><path d="M0.5 5 Q8 -3 15.5 5 Q8 13 0.5 5z" fill="#c8c8c8"/><circle cx="8" cy="5" r="3" fill="#262626"/><circle cx="7.2" cy="4.3" r="1.2" fill="#c8c8c8"/></svg>
<div class="a" style="left:43px;top:918.5px;width:15px;height:15px;background:#202020"></div>
<div class="a" style="left:61px;top:918.5px;width:15px;height:15px;background:#202020"></div>
<svg class="a" style="left:89px;top:923.5px;" width="10" height="6" viewBox="0 0 10 6"><path d="M1 1 L5 5 L9 1" stroke="#bcbcbc" stroke-width="1.4" fill="none"/></svg>
<div class="a" style="left:103.5px;top:918px;width:17px;height:17px;background:#6e84e8;box-shadow:0 0 0 1px #1a1a1a"></div>
<div class="a t" style="left:128.5px;top:916.5px;font-size:14px;line-height:20px;color:#a6a6a6">2</div>
<svg class="a" style="left:164.0px;top:918.5px;" width="15" height="14" viewBox="0 0 15 14"><path d="M7.5 0.5 L9.3 5 L14.5 5.2 L10.4 8.3 L11.9 13.5 L7.5 10.5 L3.1 13.5 L4.6 8.3 L0.5 5.2 L5.7 5z" fill="#bcbcbc"/></svg>
<div class="a t" style="left:187.5px;top:916.5px;font-size:14px;line-height:20px;color:#bcbcbc;letter-spacing:0.49px;width:86.0px;clip-path:inset(-12px 0 -12px -12px)">Line-Yellow</div>
<div class="a" style="left:426.5px;top:917px;width:81px;height:18px;background:#1c1c1c;border-radius:2px"></div>
<div class="a t" style="left:433px;top:917.0px;font-size:13px;line-height:18px;color:#d0d0d0;letter-spacing:1.00px;width:37.0px;clip-path:inset(-12px 0 -12px -12px)">通常</div>
<svg class="a" style="left:492.5px;top:923.0px;" width="10.0" height="6.0" viewBox="0 0 10.0 6.0"><path d="M1.0 1.0 L5.0 5.0 L9.0 1.0" stroke="#c0c0c0" stroke-width="1.5" fill="none"/></svg>
<div class="a" style="left:515px;top:918.5px;width:15px;height:15px;background:#202020"></div>
<div class="a" style="left:537.5px;top:917px;width:75px;height:18px;background:#1c1c1c;border-radius:2px"></div>
<div class="a t" style="left:544px;top:917.0px;font-size:13px;line-height:18px;color:#d0d0d0;letter-spacing:1.00px;width:37.0px;clip-path:inset(-12px 0 -12px -12px)">なし</div>
<svg class="a" style="left:598.5px;top:923.0px;" width="10.0" height="6.0" viewBox="0 0 10.0 6.0"><path d="M1.0 1.0 L5.0 5.0 L9.0 1.0" stroke="#c0c0c0" stroke-width="1.5" fill="none"/></svg>
<div class="a" style="left:625px;top:918px;width:15px;height:16px;background:#222"></div>
<div class="a" style="left:643px;top:918px;width:15px;height:16px;background:#222"></div>
<div class="a" style="left:661px;top:918px;width:15px;height:16px;background:#222"></div>
<svg class="a" style="left:624.5px;top:919px;" width="16" height="14" viewBox="0 0 16 14"><path d="M1 6 Q8 -1 15 6z" fill="#bcbcbc"/><rect x="7" y="6" width="2" height="7" fill="#bcbcbc"/><circle cx="5" cy="10" r="1.8" fill="#bcbcbc"/><circle cx="11" cy="10" r="1.8" fill="#bcbcbc"/><path d="M1 6 h14" stroke="#262626" stroke-width="0.8"/></svg>
<svg class="a" style="left:643px;top:919px;" width="14" height="14" viewBox="0 0 14 14"><circle cx="7" cy="7" r="2.8" fill="#7a7a7a"/><g stroke="#7a7a7a" stroke-width="1.3"><path d="M7 0 v3 M7 11 v3 M0 7 h3 M11 7 h3 M2 2 l2 2 M10 10 l2 2 M12 2 l-2 2 M2 12 l2-2"/></g></svg>
<svg class="a" style="left:661.5px;top:919px;" width="14" height="14" viewBox="0 0 14 14"><path d="M2 13 L12 1" stroke="#c8c8c8" stroke-width="1.6"/></svg>
<svg class="a" style="left:712.5px;top:918px;" width="18" height="16" viewBox="0 0 18 16"><circle cx="11" cy="6.5" r="5.5" fill="#bcbcbc"/><circle cx="8.5" cy="9" r="5.5" fill="#8a8a8a" stroke="#262626" stroke-width="1"/><circle cx="6" cy="11" r="4.5" fill="#bcbcbc" stroke="#262626" stroke-width="1"/></svg>
<div class="a" style="left:732.5px;top:918px;width:15px;height:16px;background:#222"></div>
<div class="a" style="left:750px;top:918px;width:15px;height:16px;background:#222"></div>
<svg class="a" style="left:824.5px;top:918px;" width="16" height="16" viewBox="0 0 16 16"><path d="M8.5 8 a1 1 0 0 0 -2 0 a2.5 2.5 0 0 0 5 0 a4 4 0 0 0 -8 0 a5.5 5.5 0 0 0 11 0 a6 6 0 0 0 -3 -5" stroke="#c0c0c0" stroke-width="1.5" fill="none"/></svg>
<div class="a" style="left:848.5px;top:917px;width:124px;height:18px;background:#1c1c1c;border-radius:2px"></div>
<div class="a t" style="left:855px;top:917.0px;font-size:13px;line-height:18px;color:#d0d0d0;letter-spacing:1.00px;width:37.0px;clip-path:inset(-12px 0 -12px -12px)">なし</div>
<svg class="a" style="left:958.5px;top:923.0px;" width="10.0" height="6.0" viewBox="0 0 10.0 6.0"><path d="M1.0 1.0 L5.0 5.0 L9.0 1.0" stroke="#c0c0c0" stroke-width="1.5" fill="none"/></svg>
<div class="a" style="left:2px;top:936.5px;width:996px;height:1.2px;background:#202020"></div>
<div class="a" style="left:2px;top:937.5px;width:996px;height:21.5px;background:#252525"></div>
<svg class="a" style="left:9px;top:942.5px;" width="10" height="12" viewBox="0 0 10 12"><path d="M9 0.5 L1 6 L9 11.5z" fill="#c8c8c8"/></svg>
<svg class="a" style="left:26px;top:942.0px;" width="13" height="13" viewBox="0 0 13 13"><path d="M6.5 1 L12 6.5 L6.5 12 L1 6.5z" stroke="#c8c8c8" stroke-width="1.4" fill="none"/></svg>
<svg class="a" style="left:45px;top:942.5px;" width="10" height="12" viewBox="0 0 10 12"><path d="M1 0.5 L9 6 L1 11.5z" fill="#c8c8c8"/></svg>
<div class="a" style="left:151px;top:939.5px;width:17px;height:18px;background:#202020"></div>
<svg class="a" style="left:151px;top:939.5px;" width="16" height="17" viewBox="0 0 16 17"><circle cx="8" cy="10" r="6" stroke="#3d8de8" stroke-width="1.6" fill="none"/><rect x="5.5" y="0.5" width="5" height="1.8" fill="#3d8de8"/><rect x="7.2" y="2" width="1.6" height="2" fill="#3d8de8"/><path d="M8 10 L11 6.5" stroke="#3d8de8" stroke-width="1.6"/></svg>
<svg class="a" style="left:173px;top:941.5px;" width="16" height="14" viewBox="0 0 16 14"><path d="M1 0 v13 h14" stroke="#bcbcbc" stroke-width="1.4" fill="none"/><path d="M3 4 L6 10 L9 6 L12 10 L14 4" stroke="#bcbcbc" stroke-width="1.2" fill="none"/></svg>
<div class="a t" style="left:197.5px;top:939.5px;font-size:13px;line-height:18px;color:#bcbcbc;letter-spacing:-1.33px;width:58.0px;clip-path:inset(-12px 0 -12px -12px)">スケール</div>
<div class="a" style="left:624.5px;top:940.5px;width:15px;height:15px;background:#1c1c1c"></div>
<div class="a t" style="left:646.5px;top:939.0px;font-size:14px;line-height:20px;color:#4a9cf0;letter-spacing:0.78px;width:105.0px;clip-path:inset(-12px 0 -12px -12px)">100.0,100.0%</div>
<svg class="a" style="left:839.5px;top:940.5px;" width="16" height="16" viewBox="0 0 16 16"><path d="M8.5 8 a1 1 0 0 0 -2 0 a2.5 2.5 0 0 0 5 0 a4 4 0 0 0 -8 0 a5.5 5.5 0 0 0 11 0 a6 6 0 0 0 -3 -5" stroke="#c0c0c0" stroke-width="1.5" fill="none"/></svg>
<div class="a" style="left:2px;top:959.0px;width:996px;height:1.2px;background:#202020"></div>
<div class="a" style="left:2px;top:960.5px;width:996px;height:21.5px;background:#313131"></div>
<div class="a" style="left:7px;top:964.0px;width:16px;height:15px;background:#222"></div>
<div class="a" style="left:61px;top:964.0px;width:15px;height:15px;background:#202020"></div>
<svg class="a" style="left:89.5px;top:966.5px;" width="6" height="10" viewBox="0 0 6 10"><path d="M1 1 L5 5 L1 9" stroke="#bcbcbc" stroke-width="1.4" fill="none"/></svg>
<div class="a" style="left:103.5px;top:963.5px;width:17px;height:17px;background:#6e84e8;box-shadow:0 0 0 1px #1a1a1a"></div>
<div class="a t" style="left:128.5px;top:962.0px;font-size:14px;line-height:20px;color:#a6a6a6">3</div>
<svg class="a" style="left:164.0px;top:964.0px;" width="15" height="14" viewBox="0 0 15 14"><path d="M7.5 0.5 L9.3 5 L14.5 5.2 L10.4 8.3 L11.9 13.5 L7.5 10.5 L3.1 13.5 L4.6 8.3 L0.5 5.2 L5.7 5z" fill="#bcbcbc"/></svg>
<svg class="a" style="left:185px;top:964.0px;" width="15" height="15" viewBox="0 0 15 15"><rect x="0.8" y="0.8" width="13.4" height="13.4" rx="1.5" stroke="#c8c8c8" stroke-width="1.5" fill="none"/><circle cx="7.5" cy="7.5" r="3.2" fill="#c8c8c8"/></svg>
<div class="a t" style="left:206.5px;top:962.0px;font-size:14px;line-height:20px;color:#bcbcbc;letter-spacing:0.28px;width:137.0px;clip-path:inset(-12px 0 -12px -12px)">Matte-1st-Sentence</div>
<div class="a" style="left:426.5px;top:962.5px;width:81px;height:18px;background:#1c1c1c;border-radius:2px"></div>
<div class="a t" style="left:433px;top:962.5px;font-size:13px;line-height:18px;color:#d0d0d0;letter-spacing:1.00px;width:37.0px;clip-path:inset(-12px 0 -12px -12px)">通常</div>
<svg class="a" style="left:492.5px;top:968.5px;" width="10.0" height="6.0" viewBox="0 0 10.0 6.0"><path d="M1.0 1.0 L5.0 5.0 L9.0 1.0" stroke="#c0c0c0" stroke-width="1.5" fill="none"/></svg>
<div class="a" style="left:515px;top:964.0px;width:15px;height:15px;background:#202020"></div>
<div class="a" style="left:537.5px;top:962.5px;width:75px;height:18px;background:#1c1c1c;border-radius:2px"></div>
<div class="a t" style="left:544px;top:962.5px;font-size:13px;line-height:18px;color:#d0d0d0;letter-spacing:1.00px;width:37.0px;clip-path:inset(-12px 0 -12px -12px)">なし</div>
<svg class="a" style="left:598.5px;top:968.5px;" width="10.0" height="6.0" viewBox="0 0 10.0 6.0"><path d="M1.0 1.0 L5.0 5.0 L9.0 1.0" stroke="#c0c0c0" stroke-width="1.5" fill="none"/></svg>
<div class="a" style="left:625px;top:963.5px;width:15px;height:16px;background:#222"></div>
<div class="a" style="left:643px;top:963.5px;width:15px;height:16px;background:#222"></div>
<div class="a" style="left:661px;top:963.5px;width:15px;height:16px;background:#222"></div>
<svg class="a" style="left:624.5px;top:964.5px;" width="16" height="14" viewBox="0 0 16 14"><path d="M1 6 Q8 -1 15 6z" fill="#bcbcbc"/><rect x="7" y="6" width="2" height="7" fill="#bcbcbc"/><circle cx="5" cy="10" r="1.8" fill="#bcbcbc"/><circle cx="11" cy="10" r="1.8" fill="#bcbcbc"/><path d="M1 6 h14" stroke="#262626" stroke-width="0.8"/></svg>
<svg class="a" style="left:643px;top:964.5px;" width="14" height="14" viewBox="0 0 14 14"><circle cx="7" cy="7" r="2.8" fill="#7a7a7a"/><g stroke="#7a7a7a" stroke-width="1.3"><path d="M7 0 v3 M7 11 v3 M0 7 h3 M11 7 h3 M2 2 l2 2 M10 10 l2 2 M12 2 l-2 2 M2 12 l2-2"/></g></svg>
<svg class="a" style="left:661.5px;top:964.5px;" width="14" height="14" viewBox="0 0 14 14"><path d="M2 13 L12 1" stroke="#c8c8c8" stroke-width="1.6"/></svg>
<div class="a" style="left:714.5px;top:963.5px;width:15px;height:16px;background:#222"></div>
<div class="a" style="left:750px;top:963.5px;width:15px;height:16px;background:#222"></div>
<svg class="a" style="left:824.5px;top:963.5px;" width="16" height="16" viewBox="0 0 16 16"><path d="M8.5 8 a1 1 0 0 0 -2 0 a2.5 2.5 0 0 0 5 0 a4 4 0 0 0 -8 0 a5.5 5.5 0 0 0 11 0 a6 6 0 0 0 -3 -5" stroke="#c0c0c0" stroke-width="1.5" fill="none"/></svg>
<div class="a" style="left:848.5px;top:962.5px;width:124px;height:18px;background:#1c1c1c;border-radius:2px"></div>
<div class="a t" style="left:855px;top:962.5px;font-size:13px;line-height:18px;color:#d0d0d0;letter-spacing:1.00px;width:37.0px;clip-path:inset(-12px 0 -12px -12px)">なし</div>
<svg class="a" style="left:958.5px;top:968.5px;" width="10.0" height="6.0" viewBox="0 0 10.0 6.0"><path d="M1.0 1.0 L5.0 5.0 L9.0 1.0" stroke="#c0c0c0" stroke-width="1.5" fill="none"/></svg>
<div class="a" style="left:2px;top:982.0px;width:996px;height:1.2px;background:#202020"></div>
<div class="a" style="left:2px;top:983px;width:996px;height:21.5px;background:#313131"></div>
<div class="a" style="left:7px;top:986.5px;width:16px;height:15px;background:#222"></div>
<svg class="a" style="left:7px;top:989px;" width="16" height="10" viewBox="0 0 16 10"><path d="M0.5 5 Q8 -3 15.5 5 Q8 13 0.5 5z" fill="#c8c8c8"/><circle cx="8" cy="5" r="3" fill="#262626"/><circle cx="7.2" cy="4.3" r="1.2" fill="#c8c8c8"/></svg>
<div class="a" style="left:43px;top:986.5px;width:15px;height:15px;background:#202020"></div>
<div class="a" style="left:61px;top:986.5px;width:15px;height:15px;background:#202020"></div>
<svg class="a" style="left:89px;top:991.5px;" width="10" height="6" viewBox="0 0 10 6"><path d="M1 1 L5 5 L9 1" stroke="#bcbcbc" stroke-width="1.4" fill="none"/></svg>
<div class="a" style="left:103.5px;top:986px;width:17px;height:17px;background:#b54343;box-shadow:0 0 0 1px #1a1a1a"></div>
<div class="a t" style="left:128.5px;top:984.5px;font-size:14px;line-height:20px;color:#a6a6a6">4</div>
<div class="a t" style="left:165.5px;top:982.5px;font-size:15px;line-height:21px;color:#d0d0d0;font-family:Liberation Serif;font-weight:bold">T</div>
<svg class="a" style="left:185px;top:986.5px;" width="15" height="15" viewBox="0 0 15 15"><rect x="0.8" y="0.8" width="13.4" height="13.4" rx="1.5" stroke="#c8c8c8" stroke-width="1.5" fill="none"/><circle cx="7.5" cy="7.5" r="3.2" fill="#c8c8c8"/></svg>
<div class="a t" style="left:206.5px;top:984.5px;font-size:14px;line-height:20px;color:#bcbcbc;letter-spacing:-1.93px;width:211.0px;clip-path:inset(-12px 0 -12px -12px)">一見、パリのル...見えてしまいますが</div>
<div class="a" style="left:426.5px;top:985px;width:81px;height:18px;background:#1c1c1c;border-radius:2px"></div>
<div class="a t" style="left:433px;top:985.0px;font-size:13px;line-height:18px;color:#d0d0d0;letter-spacing:1.00px;width:37.0px;clip-path:inset(-12px 0 -12px -12px)">通常</div>
<svg class="a" style="left:492.5px;top:991.0px;" width="10.0" height="6.0" viewBox="0 0 10.0 6.0"><path d="M1.0 1.0 L5.0 5.0 L9.0 1.0" stroke="#c0c0c0" stroke-width="1.5" fill="none"/></svg>
<div class="a" style="left:515px;top:986.5px;width:15px;height:15px;background:#202020"></div>
<div class="a" style="left:537.5px;top:985px;width:75px;height:18px;background:#1c1c1c;border-radius:2px"></div>
<div class="a t" style="left:544px;top:985.0px;font-size:13px;line-height:18px;color:#d0d0d0;letter-spacing:0.50px;width:50.0px;clip-path:inset(-12px 0 -12px -12px)">アル反</div>
<svg class="a" style="left:598.5px;top:991.0px;" width="10.0" height="6.0" viewBox="0 0 10.0 6.0"><path d="M1.0 1.0 L5.0 5.0 L9.0 1.0" stroke="#c0c0c0" stroke-width="1.5" fill="none"/></svg>
<div class="a" style="left:625px;top:986px;width:15px;height:16px;background:#222"></div>
<div class="a" style="left:643px;top:986px;width:15px;height:16px;background:#222"></div>
<div class="a" style="left:661px;top:986px;width:15px;height:16px;background:#222"></div>
<svg class="a" style="left:624.5px;top:987px;" width="16" height="14" viewBox="0 0 16 14"><path d="M1 6 Q8 -1 15 6z" fill="#bcbcbc"/><rect x="7" y="6" width="2" height="7" fill="#bcbcbc"/><circle cx="5" cy="10" r="1.8" fill="#bcbcbc"/><circle cx="11" cy="10" r="1.8" fill="#bcbcbc"/><path d="M1 6 h14" stroke="#262626" stroke-width="0.8"/></svg>
<svg class="a" style="left:643px;top:987px;" width="14" height="14" viewBox="0 0 14 14"><circle cx="7" cy="7" r="2.8" fill="#7a7a7a"/><g stroke="#7a7a7a" stroke-width="1.3"><path d="M7 0 v3 M7 11 v3 M0 7 h3 M11 7 h3 M2 2 l2 2 M10 10 l2 2 M12 2 l-2 2 M2 12 l2-2"/></g></svg>
<svg class="a" style="left:661.5px;top:987px;" width="14" height="14" viewBox="0 0 14 14"><path d="M2 13 L12 1" stroke="#c8c8c8" stroke-width="1.6"/></svg>
<div class="a t" style="left:678px;top:983.0px;font-size:16px;line-height:22px;color:#bcbcbc;font-family:Liberation Serif"><i>fx</i></div>
<svg class="a" style="left:712.5px;top:986px;" width="18" height="16" viewBox="0 0 18 16"><circle cx="11" cy="6.5" r="5.5" fill="#bcbcbc"/><circle cx="8.5" cy="9" r="5.5" fill="#8a8a8a" stroke="#262626" stroke-width="1"/><circle cx="6" cy="11" r="4.5" fill="#bcbcbc" stroke="#262626" stroke-width="1"/></svg>
<div class="a" style="left:732.5px;top:986px;width:15px;height:16px;background:#222"></div>
<div class="a" style="left:750px;top:986px;width:15px;height:16px;background:#222"></div>
<svg class="a" style="left:824.5px;top:986px;" width="16" height="16" viewBox="0 0 16 16"><path d="M8.5 8 a1 1 0 0 0 -2 0 a2.5 2.5 0 0 0 5 0 a4 4 0 0 0 -8 0 a5.5 5.5 0 0 0 11 0 a6 6 0 0 0 -3 -5" stroke="#c0c0c0" stroke-width="1.5" fill="none"/></svg>
<div class="a" style="left:848.5px;top:985px;width:124px;height:18px;background:#1c1c1c;border-radius:2px"></div>
<div class="a t" style="left:855px;top:985.0px;font-size:13px;line-height:18px;color:#d0d0d0;letter-spacing:1.00px;width:37.0px;clip-path:inset(-12px 0 -12px -12px)">なし</div>
<svg class="a" style="left:958.5px;top:991.0px;" width="10.0" height="6.0" viewBox="0 0 10.0 6.0"><path d="M1.0 1.0 L5.0 5.0 L9.0 1.0" stroke="#c0c0c0" stroke-width="1.5" fill="none"/></svg>
<div class="a" style="left:2px;top:1004.5px;width:996px;height:1.2px;background:#202020"></div>
<div class="a" style="left:2px;top:1005.5px;width:996px;height:21.5px;background:#252525"></div>
<svg class="a" style="left:9px;top:1010.5px;" width="10" height="12" viewBox="0 0 10 12"><path d="M9 0.5 L1 6 L9 11.5z" fill="#c8c8c8"/></svg>
<svg class="a" style="left:26px;top:1010.0px;" width="13" height="13" viewBox="0 0 13 13"><path d="M6.5 1 L12 6.5 L6.5 12 L1 6.5z" stroke="#c8c8c8" stroke-width="1.4" fill="none"/></svg>
<svg class="a" style="left:45px;top:1010.5px;" width="10" height="12" viewBox="0 0 10 12"><path d="M1 0.5 L9 6 L1 11.5z" fill="#c8c8c8"/></svg>
<div class="a" style="left:151px;top:1007.5px;width:17px;height:18px;background:#202020"></div>
<svg class="a" style="left:151px;top:1007.5px;" width="16" height="17" viewBox="0 0 16 17"><circle cx="8" cy="10" r="6" stroke="#3d8de8" stroke-width="1.6" fill="none"/><rect x="5.5" y="0.5" width="5" height="1.8" fill="#3d8de8"/><rect x="7.2" y="2" width="1.6" height="2" fill="#3d8de8"/><path d="M8 10 L11 6.5" stroke="#3d8de8" stroke-width="1.6"/></svg>
<svg class="a" style="left:173px;top:1009.5px;" width="16" height="14" viewBox="0 0 16 14"><path d="M1 0 v13 h14" stroke="#bcbcbc" stroke-width="1.4" fill="none"/><path d="M3 4 L6 10 L9 6 L12 10 L14 4" stroke="#bcbcbc" stroke-width="1.2" fill="none"/></svg>
<div class="a t" style="left:197.5px;top:1007.5px;font-size:13px;line-height:18px;color:#bcbcbc;letter-spacing:-1.00px;width:35.0px;clip-path:inset(-12px 0 -12px -12px)">位置</div>
<div class="a t" style="left:626.5px;top:1007.0px;font-size:14px;line-height:20px;color:#4a9cf0;letter-spacing:0.81px;width:83.5px;clip-path:inset(-12px 0 -12px -12px)">67.3,997.7</div>
<svg class="a" style="left:839.5px;top:1008.5px;" width="16" height="16" viewBox="0 0 16 16"><path d="M8.5 8 a1 1 0 0 0 -2 0 a2.5 2.5 0 0 0 5 0 a4 4 0 0 0 -8 0 a5.5 5.5 0 0 0 11 0 a6 6 0 0 0 -3 -5" stroke="#c0c0c0" stroke-width="1.5" fill="none"/></svg>
<div class="a" style="left:2px;top:1027.0px;width:996px;height:1.2px;background:#202020"></div>
<div class="a" style="left:998px;top:803px;width:987px;height:64px;background:#272727"></div>
<div class="a" style="left:998px;top:810px;width:2px;height:393px;background:#171717"></div>
<div class="a" style="left:1000px;top:811.5px;width:977px;height:10.5px;background:#6b6b6b;border-radius:2px"></div>
<div class="a" style="left:999px;top:811.5px;width:8px;height:10.5px;background:#3d8de8;border-radius:5px 0 0 5px"></div>
<div class="a" style="left:1969.5px;top:811.5px;width:8px;height:10.5px;background:#3d8de8;border-radius:0 5px 5px 0"></div>
<div class="a" style="left:998px;top:821px;width:40px;height:20px;overflow:hidden"><div class="t" style="position:absolute;left:-13px;top:0;font-size:14px;line-height:20px;color:#b8b8b8;-webkit-text-stroke:0.3px #b8b8b8;transform:scaleX(0.93);transform-origin:left">00:00f</div></div>
<div class="a" style="left:1007.4px;top:839px;width:1px;height:8px;background:#9a9a9a"></div>
<div class="a t" style="left:1037.77px;width:60px;text-align:center;top:820.5px;font-size:14px;line-height:20px;color:#b8b8b8;letter-spacing:1.11px">00:12f</div>
<div class="a" style="left:1067.27px;top:842px;width:1px;height:5px;background:#9a9a9a"></div>
<div class="a t" style="left:1097.6399999999999px;width:60px;text-align:center;top:820.5px;font-size:14px;line-height:20px;color:#b8b8b8;letter-spacing:1.11px">01:00f</div>
<div class="a" style="left:1127.1399999999999px;top:839px;width:1px;height:8px;background:#9a9a9a"></div>
<div class="a t" style="left:1157.51px;width:60px;text-align:center;top:820.5px;font-size:14px;line-height:20px;color:#b8b8b8;letter-spacing:1.11px">01:12f</div>
<div class="a" style="left:1187.01px;top:842px;width:1px;height:5px;background:#9a9a9a"></div>
<div class="a t" style="left:1217.3799999999999px;width:60px;text-align:center;top:820.5px;font-size:14px;line-height:20px;color:#b8b8b8;letter-spacing:1.11px">02:00f</div>
<div class="a" style="left:1246.8799999999999px;top:839px;width:1px;height:8px;background:#9a9a9a"></div>
<div class="a t" style="left:1277.25px;width:60px;text-align:center;top:820.5px;font-size:14px;line-height:20px;color:#b8b8b8;letter-spacing:1.11px">02:12f</div>
<div class="a" style="left:1306.75px;top:842px;width:1px;height:5px;background:#9a9a9a"></div>
<div class="a t" style="left:1337.12px;width:60px;text-align:center;top:820.5px;font-size:14px;line-height:20px;color:#b8b8b8;letter-spacing:1.11px">03:00f</div>
<div class="a" style="left:1366.62px;top:839px;width:1px;height:8px;background:#9a9a9a"></div>
<div class="a t" style="left:1396.99px;width:60px;text-align:center;top:820.5px;font-size:14px;line-height:20px;color:#b8b8b8;letter-spacing:1.11px">03:12f</div>
<div class="a" style="left:1426.49px;top:842px;width:1px;height:5px;background:#9a9a9a"></div>
<div class="a t" style="left:1456.86px;width:60px;text-align:center;top:820.5px;font-size:14px;line-height:20px;color:#b8b8b8;letter-spacing:1.11px">04:00f</div>
<div class="a" style="left:1486.36px;top:839px;width:1px;height:8px;background:#9a9a9a"></div>
<div class="a t" style="left:1516.73px;width:60px;text-align:center;top:820.5px;font-size:14px;line-height:20px;color:#b8b8b8;letter-spacing:1.11px">04:12f</div>
<div class="a" style="left:1546.23px;top:842px;width:1px;height:5px;background:#9a9a9a"></div>
<div class="a t" style="left:1576.6px;width:60px;text-align:center;top:820.5px;font-size:14px;line-height:20px;color:#b8b8b8;letter-spacing:1.11px">05:00f</div>
<div class="a" style="left:1606.1px;top:839px;width:1px;height:8px;background:#9a9a9a"></div>
<div class="a t" style="left:1636.4699999999998px;width:60px;text-align:center;top:820.5px;font-size:14px;line-height:20px;color:#b8b8b8;letter-spacing:1.11px">05:12f</div>
<div class="a" style="left:1665.9699999999998px;top:842px;width:1px;height:5px;background:#9a9a9a"></div>
<div class="a t" style="left:1696.34px;width:60px;text-align:center;top:820.5px;font-size:14px;line-height:20px;color:#b8b8b8;letter-spacing:1.11px">06:00f</div>
<div class="a" style="left:1725.84px;top:839px;width:1px;height:8px;background:#9a9a9a"></div>
<div class="a t" style="left:1756.21px;width:60px;text-align:center;top:820.5px;font-size:14px;line-height:20px;color:#b8b8b8;letter-spacing:1.11px">06:12f</div>
<div class="a" style="left:1785.71px;top:842px;width:1px;height:5px;background:#9a9a9a"></div>
<div class="a t" style="left:1816.08px;width:60px;text-align:center;top:820.5px;font-size:14px;line-height:20px;color:#b8b8b8;letter-spacing:1.11px">07:00f</div>
<div class="a" style="left:1845.58px;top:839px;width:1px;height:8px;background:#9a9a9a"></div>
<div class="a t" style="left:1875.9499999999998px;width:60px;text-align:center;top:820.5px;font-size:14px;line-height:20px;color:#b8b8b8;letter-spacing:1.11px">07:12f</div>
<div class="a" style="left:1905.4499999999998px;top:842px;width:1px;height:5px;background:#9a9a9a"></div>
<div class="a" style="left:1930px;top:821px;width:47px;height:20px;overflow:hidden"><div class="t" style="position:absolute;left:12px;top:0;font-size:14px;line-height:20px;color:#b8b8b8;letter-spacing:0.6px;-webkit-text-stroke:0.3px #b8b8b8">08:00f</div></div>
<div class="a" style="left:1965.32px;top:839px;width:1px;height:8px;background:#9a9a9a"></div>
<div class="a" style="left:1000px;top:846px;width:977px;height:18.5px;background:#666666"></div>
<div class="a" style="left:999px;top:846px;width:8px;height:18.5px;background:#3d8de8;border-radius:5px 0 0 5px"></div>
<div class="a" style="left:1969.5px;top:846px;width:8px;height:18.5px;background:#3d8de8;border-radius:0 5px 5px 0"></div>
<div class="a" style="left:998px;top:864.5px;width:987px;height:5.5px;background:#1e1e1e"></div>
<div class="a" style="left:1177.5px;top:865px;width:5px;height:4.5px;background:#3cba3c"></div>
<div class="a" style="left:1000px;top:870px;width:977px;height:332px;background:#353535"></div>
<div class="a" style="left:1000px;top:870.5px;width:977px;height:21px;background:#323232"></div>
<div class="a" style="left:1000px;top:891.5px;width:977px;height:1.5px;background:#262626"></div>
<div class="a" style="left:1000px;top:892.5px;width:977px;height:22px;background:#323232"></div>
<div class="a" style="left:1000px;top:914.5px;width:977px;height:1.5px;background:#262626"></div>
<div class="a" style="left:1000px;top:915.5px;width:977px;height:21.5px;background:#323232"></div>
<div class="a" style="left:1000px;top:937.0px;width:977px;height:1.5px;background:#262626"></div>
<div class="a" style="left:1000px;top:937.5px;width:977px;height:22px;background:#323232"></div>
<div class="a" style="left:1000px;top:959.5px;width:977px;height:1.5px;background:#262626"></div>
<div class="a" style="left:1000px;top:961px;width:977px;height:21px;background:#323232"></div>
<div class="a" style="left:1000px;top:982px;width:977px;height:1.5px;background:#262626"></div>
<div class="a" style="left:1000px;top:983.5px;width:977px;height:21px;background:#323232"></div>
<div class="a" style="left:1000px;top:1004.5px;width:977px;height:1.5px;background:#262626"></div>
<div class="a" style="left:1000px;top:1005px;width:977px;height:22px;background:#323232"></div>
<div class="a" style="left:1000px;top:1027px;width:977px;height:1.5px;background:#262626"></div>
<div class="a" style="left:1000px;top:870px;width:7px;height:333px;background:#2a2a2a"></div>
<div class="a" style="left:1969px;top:870px;width:8px;height:333px;background:#2c2c2c"></div>
<div class="a" style="left:1969px;top:1188px;width:8px;height:15px;background:#272727"></div>
<div class="a" style="left:1008px;top:870.5px;width:29px;height:20.5px;background:#3a3a3a"></div>
<div class="a" style="left:1036.5px;top:871.5px;width:932.5px;height:19px;background:#535a8a"></div>
<div class="a" style="left:1007px;top:917px;width:962px;height:19px;background:#535a8a"></div>
<div class="a" style="left:1007px;top:962px;width:962px;height:19px;background:#535a8a"></div>
<div class="a" style="left:1007px;top:984.3px;width:962px;height:19.4px;background:#6e3d3c"></div>
<svg class="a" style="left:1031.7px;top:897.5px;" width="12" height="12" viewBox="0 0 12 12"><path d="M0.5 0.5 h11 v2 l-3.5 3.5 3.5 3.5 v2 h-11 v-2 l3.5-3.5 -3.5-3.5z" fill="#c8c8c8"/><path d="M6 0.5 v11" stroke="#888" stroke-width="0.8" opacity="0.5"/></svg>
<svg class="a" style="left:1151.6px;top:897.5px;" width="12" height="12" viewBox="0 0 12 12"><path d="M0.5 0.5 h11 v2 l-3.5 3.5 3.5 3.5 v2 h-11 v-2 l3.5-3.5 -3.5-3.5z" fill="#c8c8c8"/><path d="M6 0.5 v11" stroke="#888" stroke-width="0.8" opacity="0.5"/></svg>
<svg class="a" style="left:1669.5px;top:897.5px;" width="12" height="12" viewBox="0 0 12 12"><path d="M0.5 0.5 h11 v2 l-3.5 3.5 3.5 3.5 v2 h-11 v-2 l3.5-3.5 -3.5-3.5z" fill="#c8c8c8"/><path d="M6 0.5 v11" stroke="#888" stroke-width="0.8" opacity="0.5"/></svg>
<svg class="a" style="left:1788.3px;top:897.5px;" width="12" height="12" viewBox="0 0 12 12"><path d="M0.5 0.5 h11 v2 l-3.5 3.5 3.5 3.5 v2 h-11 v-2 l3.5-3.5 -3.5-3.5z" fill="#c8c8c8"/><path d="M6 0.5 v11" stroke="#888" stroke-width="0.8" opacity="0.5"/></svg>
<svg class="a" style="left:1001.9px;top:942.5px;" width="12" height="12" viewBox="0 0 12 12"><path d="M0.5 0.5 h11 v2 l-3.5 3.5 3.5 3.5 v2 h-11 v-2 l3.5-3.5 -3.5-3.5z" fill="#c8c8c8"/><path d="M6 0.5 v11" stroke="#888" stroke-width="0.8" opacity="0.5"/></svg>
<svg class="a" style="left:1120.5px;top:942.5px;" width="12" height="12" viewBox="0 0 12 12"><path d="M0.5 0.5 h11 v2 l-3.5 3.5 3.5 3.5 v2 h-11 v-2 l3.5-3.5 -3.5-3.5z" fill="#c8c8c8"/><path d="M6 0.5 v11" stroke="#888" stroke-width="0.8" opacity="0.5"/></svg>
<svg class="a" style="left:1714.9px;top:942.5px;" width="12" height="12" viewBox="0 0 12 12"><path d="M0.5 0.5 h11 v2 l-3.5 3.5 3.5 3.5 v2 h-11 v-2 l3.5-3.5 -3.5-3.5z" fill="#c8c8c8"/><path d="M6 0.5 v11" stroke="#888" stroke-width="0.8" opacity="0.5"/></svg>
<svg class="a" style="left:1833.5px;top:942.5px;" width="12" height="12" viewBox="0 0 12 12"><path d="M0.5 0.5 h11 v2 l-3.5 3.5 3.5 3.5 v2 h-11 v-2 l3.5-3.5 -3.5-3.5z" fill="#c8c8c8"/><path d="M6 0.5 v11" stroke="#888" stroke-width="0.8" opacity="0.5"/></svg>
<svg class="a" style="left:1066.1px;top:1010.5px;" width="12" height="12" viewBox="0 0 12 12"><path d="M0.5 0.5 h11 v2 l-3.5 3.5 3.5 3.5 v2 h-11 v-2 l3.5-3.5 -3.5-3.5z" fill="#c8c8c8"/><path d="M6 0.5 v11" stroke="#888" stroke-width="0.8" opacity="0.5"/></svg>
<svg class="a" style="left:1161.3px;top:1010.5px;" width="12" height="12" viewBox="0 0 12 12"><path d="M0.5 0.5 h11 v2 l-3.5 3.5 3.5 3.5 v2 h-11 v-2 l3.5-3.5 -3.5-3.5z" fill="#c8c8c8"/><path d="M6 0.5 v11" stroke="#888" stroke-width="0.8" opacity="0.5"/></svg>
<svg class="a" style="left:1679.2px;top:1010.5px;" width="12" height="12" viewBox="0 0 12 12"><path d="M0.5 0.5 h11 v2 l-3.5 3.5 3.5 3.5 v2 h-11 v-2 l3.5-3.5 -3.5-3.5z" fill="#c8c8c8"/><path d="M6 0.5 v11" stroke="#888" stroke-width="0.8" opacity="0.5"/></svg>
<svg class="a" style="left:1774px;top:1010.5px;" width="12" height="12" viewBox="0 0 12 12"><path d="M0.5 0.5 h11 v2 l-3.5 3.5 3.5 3.5 v2 h-11 v-2 l3.5-3.5 -3.5-3.5z" fill="#c8c8c8"/><path d="M6 0.5 v11" stroke="#888" stroke-width="0.8" opacity="0.5"/></svg>
<div class="a" style="left:1977px;top:803px;width:8px;height:400px;background:#272727"></div>
<svg class="a" style="left:1980px;top:848px;" width="17" height="18" viewBox="0 0 17 18"><path d="M1 1 h15 v10 l-7.5 6 -7.5-6z" fill="#c0c0c0"/></svg>
<svg class="a" style="left:1978px;top:872px;" width="20" height="19" viewBox="0 0 20 19"><path d="M3 12 L9 4 h9 v6 h-9" stroke="#c0c0c0" stroke-width="1.6" fill="none"/><circle cx="8" cy="13" r="3.5" stroke="#c0c0c0" stroke-width="1.6" fill="#272727"/></svg>
<div class="a" style="left:1176.3px;top:811px;width:1.5px;height:392px;background:#3d8de8"></div>
<svg class="a" style="left:1170px;top:828.5px;" width="14" height="16" viewBox="0 0 14 16"><path d="M0.5 0.5 h13 v5 L7 15.5 L0.5 5.5z" fill="#3d8de8"/><rect x="5.5" y="8" width="3" height="1" fill="#1a3a70"/><rect x="6.5" y="8" width="1" height="6" fill="#1a3a70"/></svg>
<div class="a" style="left:2px;top:1202px;width:1995.5px;height:20.5px;background:#222222"></div>
<div class="a" style="left:2px;top:1202px;width:1124px;height:20.5px;background:#262626;border-top:1.5px solid #171717;box-sizing:border-box"></div>
<div class="a" style="left:1977px;top:1202px;width:20px;height:20.5px;background:#272727"></div>
<svg class="a" style="left:9px;top:1205px;" width="15" height="16" viewBox="0 0 15 16"><g fill="none" stroke="#3d8de8" stroke-width="1.3"><rect x="1" y="1" width="9" height="9"/><rect x="5" y="5" width="9" height="9"/></g><rect x="7" y="7" width="5" height="5" fill="#3d8de8"/></svg>
<svg class="a" style="left:30px;top:1205px;" width="15" height="16" viewBox="0 0 15 16"><g fill="none" stroke="#3d8de8" stroke-width="1.3"><circle cx="6" cy="6" r="4.8"/><rect x="5" y="5" width="9" height="9"/></g></svg>
<svg class="a" style="left:52px;top:1205px;" width="14" height="16" viewBox="0 0 14 16"><g fill="none" stroke="#c0c0c0" stroke-width="1.3"><path d="M4 1 q-3 0 -3 3 v2 q0 1.5 -1 2 q1 .5 1 2 v2 q0 3 3 3 M10 1 q3 0 3 3 v2 q0 1.5 1 2 q-1 .5 -1 2 v2 q0 3 -3 3"/></g><rect x="5.5" y="3" width="3" height="10" fill="#c0c0c0"/></svg>
<svg class="a" style="left:1003px;top:1208px;" width="14" height="8" viewBox="0 0 14 8"><path d="M1 7 L7 1 L13 7z" fill="#c8c8c8"/></svg>
<div class="a" style="left:1040px;top:1212px;width:46px;height:1.5px;background:#5a5a5a"></div>
<svg class="a" style="left:1029px;top:1207px;" width="12" height="12" viewBox="0 0 12 12"><circle cx="6" cy="6" r="4.5" stroke="#c0c0c0" stroke-width="1.6" fill="#272727"/></svg>
<svg class="a" style="left:1099px;top:1206px;" width="22" height="10" viewBox="0 0 22 10"><path d="M1 9 L8 2 L11 5 L14 2 L21 9z" fill="#c8c8c8"/></svg>
<svg class="a" style="left:5px;top:26px;" width="4" height="22" viewBox="0 0 4 22"><g fill="#3a3a3a"><rect x="0" y="0.0" width="3" height="1.2"/><rect x="0" y="2.5" width="3" height="1.2"/><rect x="0" y="5.0" width="3" height="1.2"/><rect x="0" y="7.5" width="3" height="1.2"/><rect x="0" y="10.0" width="3" height="1.2"/><rect x="0" y="12.5" width="3" height="1.2"/><rect x="0" y="15.0" width="3" height="1.2"/><rect x="0" y="17.5" width="3" height="1.2"/><rect x="0" y="20.0" width="3" height="1.2"/></g></svg>
<svg class="a" style="left:19px;top:27px;" width="19" height="17" viewBox="0 0 19 17"><path d="M9.5 0.5 L18.5 8.5 h-3 v8 h-4.5 v-5 h-3 v5 h-4.5 v-8 h-3z" fill="#c8c8c8"/></svg>
<div class="a" style="left:53px;top:24.5px;width:27px;height:23.5px;background:#1a1a1a;border-radius:3px"></div>
<svg class="a" style="left:59px;top:25px;" width="18" height="23" viewBox="0 0 18 23"><path d="M0.8 1 L16.5 15 L9 15.5 L1.5 21.5z" fill="#3d8de8"/></svg>
<svg class="a" style="left:86px;top:25px;" width="21" height="22" viewBox="0 0 21 22"><g stroke="#c8c8c8" stroke-width="2.4" stroke-linecap="round"><path d="M6.5 11 V5"/><path d="M9.5 10 V2.5"/><path d="M12.5 10 V3"/><path d="M15.5 11 V5.5"/><path d="M2.5 12 L5.5 15"/></g><path d="M5 10 h12 v4 q0 6 -6 6 q-4 0 -6-4z" fill="#c8c8c8"/></svg>
<svg class="a" style="left:116px;top:26px;" width="21" height="21" viewBox="0 0 21 21"><circle cx="8" cy="8" r="6" stroke="#c8c8c8" stroke-width="2" fill="none"/><path d="M12.5 12.5 L19 19" stroke="#c8c8c8" stroke-width="2.6"/></svg>
<div class="a" style="left:145px;top:27px;width:1px;height:18px;background:#303030"></div>
<svg class="a" style="left:154px;top:25px;" width="20" height="22" viewBox="0 0 20 22"><path d="M3.5 14 A7.5 7.5 0 0 0 17.5 13" stroke="#c8c8c8" stroke-width="1.8" fill="none" stroke-dasharray="1.6 1.8"/><path d="M5 6.5 A7.5 7.5 0 0 1 17.5 13" stroke="#c8c8c8" stroke-width="2" fill="none"/><path d="M1 4 L8 4.5 L3.5 10z" fill="#c8c8c8"/></svg>
<svg class="a" style="left:182px;top:27px;" width="23" height="17" viewBox="0 0 23 17"><rect x="0.5" y="2" width="14" height="12" rx="2" fill="#c8c8c8"/><path d="M14 6 L21 2 v12 L14 10z" fill="#c8c8c8"/></svg>
<svg class="a" style="left:202px;top:42px;" width="5" height="5" viewBox="0 0 5 5"><path d="M4.5 0.5 v4 h-4z" fill="#c8c8c8"/></svg>
<svg class="a" style="left:214px;top:26px;" width="21" height="20" viewBox="0 0 21 20"><g stroke="#c8c8c8" stroke-width="1.6" fill="none" stroke-dasharray="2.4 1.6"><rect x="2" y="3" width="17" height="14"/></g><rect x="6" y="7" width="9" height="6" stroke="#c8c8c8" stroke-width="1.6" fill="none"/><g fill="#c8c8c8"><rect x="0" y="1" width="4" height="4"/><rect x="17" y="1" width="4" height="4"/><rect x="0" y="15" width="4" height="4"/><rect x="17" y="15" width="4" height="4"/></g></svg>
<div class="a" style="left:243px;top:27px;width:1px;height:18px;background:#303030"></div>
<svg class="a" style="left:252px;top:27px;" width="20" height="18" viewBox="0 0 20 18"><rect x="1" y="1" width="17" height="15" stroke="#c8c8c8" stroke-width="1.8" fill="#4a4a4a"/></svg>
<svg class="a" style="left:271px;top:42px;" width="5" height="5" viewBox="0 0 5 5"><path d="M4.5 0.5 v4 h-4z" fill="#c8c8c8"/></svg>
<svg class="a" style="left:281px;top:26px;" width="21" height="20" viewBox="0 0 21 20"><path d="M3 18 L5 9 L12 3 L18 9 L12 16z" fill="#c8c8c8"/><circle cx="9.5" cy="11.5" r="1.6" fill="#262626"/><path d="M3 18 L9 12" stroke="#262626" stroke-width="1"/><path d="M13 2 L19 8" stroke="#c8c8c8" stroke-width="2"/></svg>
<svg class="a" style="left:299px;top:42px;" width="5" height="5" viewBox="0 0 5 5"><path d="M4.5 0.5 v4 h-4z" fill="#c8c8c8"/></svg>
<svg class="a" style="left:311px;top:26px;" width="22" height="20" viewBox="0 0 22 20"><path d="M1 1 h20 v5 h-1.5 q-.5-3 -3-3 h-3.5 v14 q0 1 2 1 v1 h-7 v-1 q2 0 2-1 v-14 h-3.5 q-2.5 0 -3 3 h-1.5z" fill="#c8c8c8"/></svg>
<svg class="a" style="left:330px;top:42px;" width="5" height="5" viewBox="0 0 5 5"><path d="M4.5 0.5 v4 h-4z" fill="#c8c8c8"/></svg>
<div class="a" style="left:341px;top:27px;width:1px;height:18px;background:#303030"></div>
<svg class="a" style="left:350px;top:26px;" width="21" height="21" viewBox="0 0 21 21"><path d="M19 1 L9 13 L7 11 z" fill="#c8c8c8"/><path d="M6 12 Q2 13 2.5 17 Q2 19 0.5 20 Q6 20.5 8 16 z" fill="#c8c8c8"/></svg>
<svg class="a" style="left:380px;top:26px;" width="20" height="21" viewBox="0 0 20 21"><circle cx="10" cy="4" r="3" fill="#c8c8c8"/><rect x="8.5" y="6" width="3" height="6" fill="#c8c8c8"/><path d="M2 12 h16 v4 h-16z" fill="#c8c8c8"/><rect x="1" y="18" width="18" height="2" fill="#c8c8c8"/></svg>
<svg class="a" style="left:409px;top:25px;" width="21" height="21" viewBox="0 0 21 21"><path d="M12 2 L19 9 L10 18 L3 11z" fill="#c8c8c8"/><path d="M3 11 L10 18 L8 20 L1 13z" fill="none" stroke="#c8c8c8" stroke-width="1.5"/></svg>
<div class="a" style="left:437.5px;top:27px;width:1px;height:18px;background:#303030"></div>
<svg class="a" style="left:446px;top:26px;" width="23" height="20" viewBox="0 0 23 20"><circle cx="5" cy="3" r="2.2" fill="#c8c8c8"/><path d="M3 6 h4 l2 5 -2 1 v7 h-2 v-6 l-2 6 h-2 l3-9 -2 2z" fill="#c8c8c8"/><path d="M21 1 L13 11 L11 9z" fill="#c8c8c8"/><path d="M10 10 Q7 12 8 15 q-1 2 -2 3 q5 0 5-4z" fill="#c8c8c8"/></svg>
<svg class="a" style="left:466px;top:42px;" width="5" height="5" viewBox="0 0 5 5"><path d="M4.5 0.5 v4 h-4z" fill="#c8c8c8"/></svg>
<svg class="a" style="left:484px;top:25px;" width="19" height="19" viewBox="0 0 19 19"><g fill="#c8c8c8"><path d="M10 2.5 L13.5 -1 L19.5 5 L16 8.5z" transform="translate(-0.5,1)"/><path d="M8.5 5 L14 10.5 L12.5 12 L7 6.5z"/><path d="M5 7.5 L11.5 14 L10 15.5 L3.5 9z"/><path d="M9.5 4.5 L14.5 9.5 L16 8 L11 3z"/></g><path d="M7 12 L1.5 17.5" stroke="#c8c8c8" stroke-width="1.8"/></svg>
<svg class="a" style="left:501px;top:42px;" width="5" height="5" viewBox="0 0 5 5"><path d="M4.5 0.5 v4 h-4z" fill="#c8c8c8"/></svg>
<div class="a" style="left:539px;top:27px;width:1px;height:18px;background:#303030"></div>
<div class="a" style="left:565px;top:25px;width:25px;height:23px;background:#222;border-radius:2px"></div>
<svg class="a" style="left:566px;top:26px;" width="22" height="21" viewBox="0 0 22 21"><g stroke="#2c4a70" stroke-width="1.6" fill="none"><path d="M11 11 v-8 M11 11 l-8 6 M11 11 l8 6"/></g><circle cx="11" cy="11" r="2" fill="#2c4a70"/></svg>
<svg class="a" style="left:593px;top:26px;" width="22" height="21" viewBox="0 0 22 21"><g stroke="#4a4a4a" stroke-width="1.5" fill="none"><path d="M11 11 v-9 M11 11 l-8 6 M11 11 l8 6"/><circle cx="11" cy="11" r="5"/></g></svg>
<svg class="a" style="left:620px;top:26px;" width="22" height="21" viewBox="0 0 22 21"><g stroke="#4a4a4a" stroke-width="1.5" fill="none"><path d="M2 4 L12 10 L20 2 M2 4 v10 l10 5 l8-8 M12 10 v9"/></g></svg>
<div class="a" style="left:654px;top:27px;width:1px;height:18px;background:#303030"></div>
<div class="a" style="left:663.5px;top:28.5px;width:15.5px;height:15.5px;border:2.4px solid #a8a8a8;box-sizing:border-box;border-radius:2px"></div>
<div class="a t" style="left:683px;top:27.5px;font-size:13px;line-height:18px;color:#b0b0b0;letter-spacing:0.00px;width:62.0px;clip-path:inset(-12px 0 -12px -12px)">スナップ</div>
<svg class="a" style="left:744px;top:28px;" width="17" height="17" viewBox="0 0 17 17"><path d="M1 16 L8 9 L15 16" stroke="#c8c8c8" stroke-width="1.5" fill="none"/><path d="M8 9 L15 2" stroke="#c8c8c8" stroke-width="1.5"/><path d="M10 2 h5 v5z" fill="#c8c8c8"/></svg>
<svg class="a" style="left:774px;top:28px;" width="16" height="16" viewBox="0 0 16 16"><g fill="none" stroke="#3d8de8" stroke-width="1.6"><path d="M1 5 v-4 h4 M11 1 h4 v4 M15 11 v4 h-4 M5 15 h-4 v-4"/></g><g fill="#3d8de8"><rect x="5" y="5" width="2" height="2"/><rect x="9" y="5" width="2" height="2"/><rect x="5" y="9" width="2" height="2"/><rect x="9" y="9" width="2" height="2"/></g></svg>
<div class="a" style="left:1164.5px;top:23px;width:1px;height:29px;background:#1a1a1a"></div>
<div class="a t" style="left:1192px;top:27.5px;font-size:13.5px;line-height:19px;color:#4a9cf0;letter-spacing:-1.75px;width:73.0px;clip-path:inset(-12px 0 -12px -12px)">デフォルト</div>
<svg class="a" style="left:1270px;top:32px;" width="12" height="11" viewBox="0 0 12 11"><g fill="#4a9cf0"><rect x="0" y="0" width="11" height="1.8"/><rect x="0" y="4.3" width="11" height="1.8"/><rect x="0" y="8.6" width="11" height="1.8"/></g></svg>
<div class="a t" style="left:1308.5px;top:27.5px;font-size:13.5px;line-height:19px;color:#a8a8a8;letter-spacing:-2.50px;width:35.5px;clip-path:inset(-12px 0 -12px -12px)">学習</div>
<div class="a t" style="left:1386px;top:27.5px;font-size:13.5px;line-height:19px;color:#a8a8a8;letter-spacing:-2.00px;width:36.0px;clip-path:inset(-12px 0 -12px -12px)">標準</div>
<div class="a t" style="left:1463px;top:27.5px;font-size:13.5px;line-height:19px;color:#a8a8a8;letter-spacing:-1.25px;width:75.0px;clip-path:inset(-12px 0 -12px -12px)">小さい画面</div>
<div class="a t" style="left:1580px;top:27.5px;font-size:13.5px;line-height:19px;color:#a8a8a8;letter-spacing:-1.25px;width:75.0px;clip-path:inset(-12px 0 -12px -12px)">ライブラリ</div>
<svg class="a" style="left:1695px;top:30px;" width="13" height="11" viewBox="0 0 13 11"><path d="M1.5 1 L6 5.5 L1.5 10 M7 1 L11.5 5.5 L7 10" stroke="#c8c8c8" stroke-width="2" fill="none"/></svg>
<div class="a" style="left:1719px;top:23px;width:1px;height:29px;background:#1a1a1a"></div>
<div class="a" style="left:1725px;top:31.5px;width:25px;height:13px;background:#c8c8c8;border-radius:2px"></div>
<svg class="a" style="left:1727px;top:32px;" width="21" height="11" viewBox="0 0 21 11"><circle cx="5" cy="5.5" r="2.8" fill="#262626"/><g stroke="#262626" stroke-width="1.3"><path d="M5 1 v9 M0.5 5.5 h9 M2 2.5 l6 6 M8 2.5 l-6 6"/></g><circle cx="5" cy="5.5" r="1.3" fill="#c8c8c8"/><path d="M12 3 h7 M12 8 h7" stroke="#262626" stroke-width="1.5"/><path d="M17 1 l2 2 -2 2 M14 6 l-2 2 2 2" stroke="#262626" stroke-width="1.2" fill="none"/></svg>
<div class="a" style="left:1764px;top:28px;width:229px;height:19px;background:#191919;border-radius:3px;box-shadow:0 0 0 1px #2c2c2c"></div>
<svg class="a" style="left:1770px;top:30px;" width="15" height="15" viewBox="0 0 15 15"><circle cx="9" cy="6" r="4.5" stroke="#c8c8c8" stroke-width="1.6" fill="none"/><path d="M5.8 9.2 L1 14" stroke="#c8c8c8" stroke-width="1.8"/></svg>
<div class="a t" style="left:1797.5px;top:28.0px;font-size:13.5px;line-height:19px;color:#c8c8c8;letter-spacing:-1.40px;width:87.0px;clip-path:inset(-12px 0 -12px -12px)">ヘルプを検索</div>
</body></html>
